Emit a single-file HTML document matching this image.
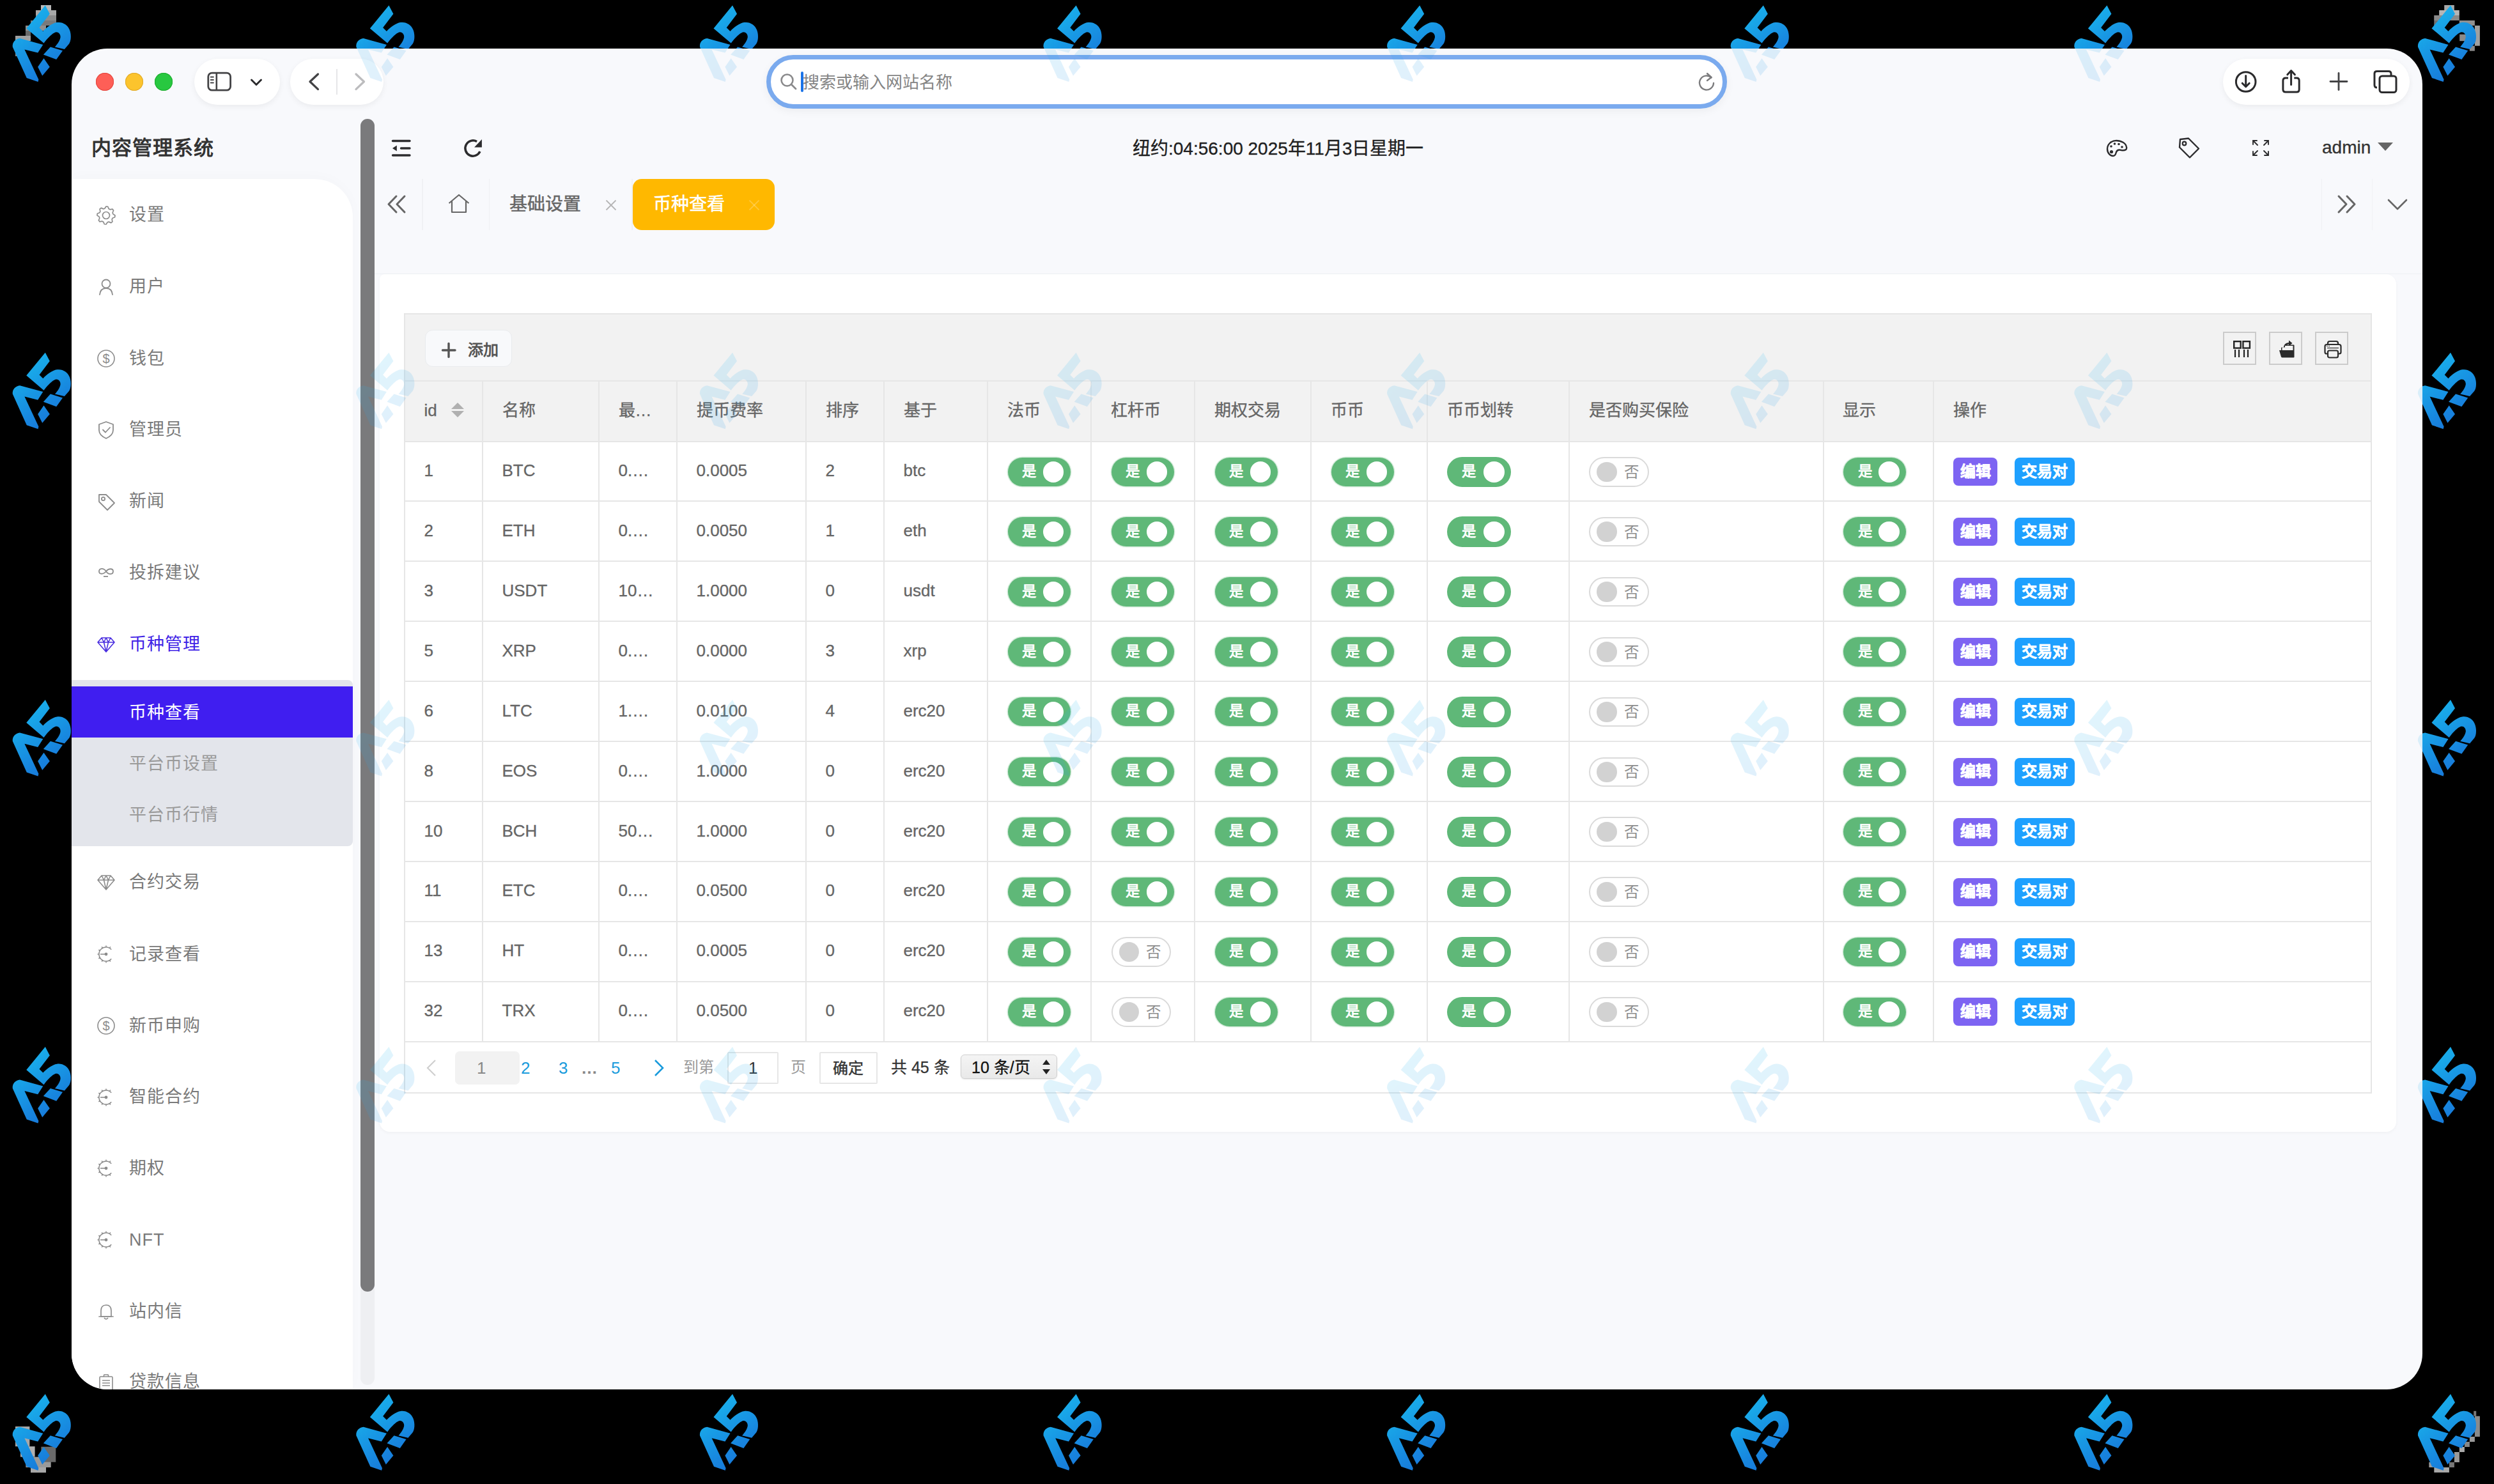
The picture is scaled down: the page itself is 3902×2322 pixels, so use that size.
<!DOCTYPE html><html lang="zh-CN"><head><meta charset="utf-8"><title>币种查看</title><style>
*{box-sizing:border-box;margin:0;padding:0}
html,body{width:3902px;height:2322px;overflow:hidden;background:#000;font-family:"Liberation Sans", sans-serif}
.a{position:absolute}
.t{position:absolute;white-space:nowrap;line-height:1}
svg{position:absolute;overflow:visible}
</style></head><body>
<svg width="0" height="0" style="position:absolute"><defs>
<linearGradient id="wg" gradientUnits="userSpaceOnUse" x1="-45" y1="-50" x2="35" y2="55"><stop offset="0" stop-color="#16b8ee"/><stop offset="1" stop-color="#1468d4"/></linearGradient>
<linearGradient id="wg2" gradientUnits="userSpaceOnUse" x1="-45" y1="-50" x2="35" y2="55"><stop offset="0" stop-color="#2cc6f6"/><stop offset="1" stop-color="#2a92e8"/></linearGradient>
<g id="wm">
<path d="M2.8,-58.5 L9.8,-45.2 L-6.5,-23.8 L-0.7,-18 C5,-24 14,-31 21.4,-31.9 C30,-33 38,-28 41,-20 C44,-12 43,-2 39.9,1.7 L32.9,9.9 L17.9,6.4 C22,2 26,-4 26.6,-8.7 C27,-13 24,-17 20.2,-16.8 C16,-16.5 10,-11 4,-4 L0.5,0.6 L-26.7,-22.6 Z"/>
<path d="M-48.2,6.4 C-49,-1 -44,-6 -37,-7 L-0.7,2.9 L-8.8,15.6 L-29.6,10.4 L-7.6,57.4 L-8.5,61 L-26.2,55 Z"/>
<path d="M10.9,6.4 L30,12.2 L20.2,26.1 L-0.1,18.5 Z"/>
<path d="M0.5,24.3 L9.8,37.7 L-1.8,51.6 L-8.8,37.7 Z"/>
</g></defs></svg>
<svg class="a" style="left:0;top:0" width="3902" height="2322"><rect x="64.0" y="8.0" width="16.0" height="8.0" fill="#b8b8b8"/><rect x="56.0" y="16.0" width="32.0" height="8.0" fill="#a8a8a8"/><rect x="56.0" y="24.0" width="32.0" height="8.0" fill="#8c8c8c"/><rect x="48.0" y="32.0" width="40.0" height="8.0" fill="#7a7a7a"/><rect x="40.0" y="40.0" width="32.0" height="8.0" fill="#909090"/><rect x="40.0" y="48.0" width="8.0" height="8.0" fill="#6a6a6a"/><rect x="24.0" y="56.0" width="24.0" height="8.0" fill="#a0a0a0"/><rect x="24.0" y="64.0" width="8.0" height="24.0" fill="#888888"/><rect x="3824.2" y="8.0" width="15.6" height="8.0" fill="#a8a8a8"/><rect x="3816.2" y="16.0" width="31.6" height="8.0" fill="#b5b5b5"/><rect x="3808.2" y="24.0" width="39.6" height="8.0" fill="#8a8a8a"/><rect x="3808.2" y="32.0" width="15.6" height="8.0" fill="#707070"/><rect x="3847.8" y="32.0" width="24.1" height="8.0" fill="#909090"/><rect x="3871.9" y="40.0" width="8.0" height="31.7" fill="#a0a0a0"/><rect x="3863.9" y="71.7" width="8.0" height="8.0" fill="#8a8a8a"/><rect x="3848.2" y="53.8" width="11.4" height="10.4" fill="#8a8a8a"/><rect x="24.0" y="2232.0" width="22.4" height="31.2" fill="#a8a8a8"/><rect x="32.0" y="2263.2" width="22.6" height="16.4" fill="#b0b0b0"/><rect x="40.4" y="2279.6" width="39.3" height="16.4" fill="#9a9a9a"/><rect x="48.0" y="2296.0" width="24.0" height="8.2" fill="#a8a8a8"/><rect x="64.4" y="2263.7" width="22.9" height="24.0" fill="#6a6a6a"/><rect x="3870.2" y="2207.8" width="4.0" height="8.0" fill="#777777"/><rect x="3871.9" y="2215.8" width="8.0" height="32.2" fill="#8a8a8a"/><rect x="3863.9" y="2248.0" width="8.0" height="8.0" fill="#999999"/><rect x="3855.9" y="2256.0" width="8.0" height="8.0" fill="#888888"/><rect x="3847.9" y="2264.0" width="8.0" height="8.0" fill="#aaaaaa"/><rect x="3839.9" y="2272.0" width="8.0" height="16.0" fill="#9a9a9a"/><rect x="3831.9" y="2288.0" width="8.0" height="8.0" fill="#777777"/><rect x="3808.3" y="2296.0" width="23.6" height="8.0" fill="#a8a8a8"/><rect x="3800.3" y="2288.0" width="8.0" height="8.0" fill="#999999"/></svg>
<svg class="a" style="left:0;top:0;opacity:1" width="3902" height="2322" viewBox="0 0 3902 2322"><use href="#wm" fill="url(#wg)" transform="translate(68.0,67.0)"/><use href="#wm" fill="url(#wg)" transform="translate(605.6,67.0)"/><use href="#wm" fill="url(#wg)" transform="translate(1143.2,67.0)"/><use href="#wm" fill="url(#wg)" transform="translate(1680.8,67.0)"/><use href="#wm" fill="url(#wg)" transform="translate(2218.4,67.0)"/><use href="#wm" fill="url(#wg)" transform="translate(2756.0,67.0)"/><use href="#wm" fill="url(#wg)" transform="translate(3293.6,67.0)"/><use href="#wm" fill="url(#wg)" transform="translate(3831.2,67.0)"/><use href="#wm" fill="url(#wg)" transform="translate(68.0,610.2)"/><use href="#wm" fill="url(#wg)" transform="translate(605.6,610.2)"/><use href="#wm" fill="url(#wg)" transform="translate(1143.2,610.2)"/><use href="#wm" fill="url(#wg)" transform="translate(1680.8,610.2)"/><use href="#wm" fill="url(#wg)" transform="translate(2218.4,610.2)"/><use href="#wm" fill="url(#wg)" transform="translate(2756.0,610.2)"/><use href="#wm" fill="url(#wg)" transform="translate(3293.6,610.2)"/><use href="#wm" fill="url(#wg)" transform="translate(3831.2,610.2)"/><use href="#wm" fill="url(#wg)" transform="translate(68.0,1153.4)"/><use href="#wm" fill="url(#wg)" transform="translate(605.6,1153.4)"/><use href="#wm" fill="url(#wg)" transform="translate(1143.2,1153.4)"/><use href="#wm" fill="url(#wg)" transform="translate(1680.8,1153.4)"/><use href="#wm" fill="url(#wg)" transform="translate(2218.4,1153.4)"/><use href="#wm" fill="url(#wg)" transform="translate(2756.0,1153.4)"/><use href="#wm" fill="url(#wg)" transform="translate(3293.6,1153.4)"/><use href="#wm" fill="url(#wg)" transform="translate(3831.2,1153.4)"/><use href="#wm" fill="url(#wg)" transform="translate(68.0,1696.6)"/><use href="#wm" fill="url(#wg)" transform="translate(605.6,1696.6)"/><use href="#wm" fill="url(#wg)" transform="translate(1143.2,1696.6)"/><use href="#wm" fill="url(#wg)" transform="translate(1680.8,1696.6)"/><use href="#wm" fill="url(#wg)" transform="translate(2218.4,1696.6)"/><use href="#wm" fill="url(#wg)" transform="translate(2756.0,1696.6)"/><use href="#wm" fill="url(#wg)" transform="translate(3293.6,1696.6)"/><use href="#wm" fill="url(#wg)" transform="translate(3831.2,1696.6)"/><use href="#wm" fill="url(#wg)" transform="translate(68.0,2239.8)"/><use href="#wm" fill="url(#wg)" transform="translate(605.6,2239.8)"/><use href="#wm" fill="url(#wg)" transform="translate(1143.2,2239.8)"/><use href="#wm" fill="url(#wg)" transform="translate(1680.8,2239.8)"/><use href="#wm" fill="url(#wg)" transform="translate(2218.4,2239.8)"/><use href="#wm" fill="url(#wg)" transform="translate(2756.0,2239.8)"/><use href="#wm" fill="url(#wg)" transform="translate(3293.6,2239.8)"/><use href="#wm" fill="url(#wg)" transform="translate(3831.2,2239.8)"/></svg>
<div class="a" style="left:112px;top:76px;width:3678px;height:2098px;background:#f8f9fc;border-radius:56px;overflow:hidden">
<div class="a" style="left:38px;top:38px;width:28px;height:28px;border-radius:50%;background:#fe5f57;box-shadow:inset 0 0 0 1px #e2463f"></div>
<div class="a" style="left:84px;top:38px;width:28px;height:28px;border-radius:50%;background:#fcc42d;box-shadow:inset 0 0 0 1px #dfa92a"></div>
<div class="a" style="left:130px;top:38px;width:28px;height:28px;border-radius:50%;background:#28c840;box-shadow:inset 0 0 0 1px #1eab2f"></div>
<div class="a" style="left:192.0px;top:16.0px;width:134.0px;height:72.0px;background:#fff;border-radius:36px;box-shadow:0 3px 10px rgba(0,0,0,0.06)"></div>
<svg style="left:210.0px;top:34.0px" width="44" height="36" viewBox="0 0 44 36"><rect x="3.8" y="4.1" width="34.8" height="27.1" rx="6" fill="none" stroke="#434345" stroke-width="2.8"/><line x1="16.8" y1="4.1" x2="16.8" y2="31.2" stroke="#434345" stroke-width="2.6"/><g stroke="#434345" stroke-width="2.2" stroke-linecap="round"><line x1="7.8" y1="10.5" x2="11.8" y2="10.5"/><line x1="7.8" y1="15" x2="11.8" y2="15"/><line x1="7.8" y1="19.5" x2="11.8" y2="19.5"/></g></svg>
<svg style="left:276.0px;top:44.0px" width="26" height="18" viewBox="0 0 26 18"><polyline points="5.5,5 13,12.5 20.5,5" fill="none" stroke="#2a2a2c" stroke-width="2.9" stroke-linecap="round" stroke-linejoin="round"/></svg>
<div class="a" style="left:342.0px;top:16.0px;width:146.0px;height:72.0px;background:#fff;border-radius:36px;box-shadow:0 3px 10px rgba(0,0,0,0.06)"></div>
<svg style="left:366.0px;top:34.0px" width="26" height="36" viewBox="0 0 26 36"><polyline points="19.5,6 7,17.8 19.5,29.6" fill="none" stroke="#434345" stroke-width="3.3" stroke-linecap="round" stroke-linejoin="round"/></svg>
<div class="a" style="left:414.0px;top:32.0px;width:2.0px;height:40.0px;background:#e6e6e8"></div>
<svg style="left:438.0px;top:34.0px" width="26" height="36" viewBox="0 0 26 36"><polyline points="7,6 19.5,17.8 7,29.6" fill="none" stroke="#bcbcbe" stroke-width="3.3" stroke-linecap="round" stroke-linejoin="round"/></svg>
<div class="a" style="left:1087.0px;top:10.0px;width:1503.0px;height:84.0px;background:#fff;border:7px solid #7aaaee;border-radius:42px;box-shadow:0 4px 14px rgba(0,0,0,0.05)"></div>
<svg style="left:1108.0px;top:38.0px" width="30" height="30" viewBox="0 0 30 30"><circle cx="11.5" cy="11.5" r="9" fill="none" stroke="#8a8a8c" stroke-width="2.6"/><line x1="18" y1="18" x2="25" y2="25" stroke="#8a8a8c" stroke-width="2.8" stroke-linecap="round"/></svg>
<div class="a" style="left:1141.0px;top:36.0px;width:4.0px;height:32.0px;background:#1a73e8;border-radius:2px"></div>
<div class="t" style="left:1144.0px;top:40.0px;font-size:26px;color:#858585;font-weight:500;">搜索或输入网站名称</div>
<svg style="left:2542.0px;top:36.0px" width="32" height="32" viewBox="0 0 32 32"><path d="M23.5,9.5 A11,11 0 1 0 27,18" fill="none" stroke="#7c7c7e" stroke-width="2.4" stroke-linecap="round"/><polyline points="17,3 23.5,9 17,14" fill="none" stroke="#7c7c7e" stroke-width="2.4" stroke-linecap="round" stroke-linejoin="round"/></svg>
<div class="a" style="left:3366.0px;top:16.0px;width:292.0px;height:72.0px;background:#fff;border-radius:36px;box-shadow:0 3px 10px rgba(0,0,0,0.06)"></div>
<svg style="left:3382.0px;top:33.0px" width="40" height="40" viewBox="0 0 40 40"><circle cx="19.7" cy="19" r="15.3" fill="none" stroke="#2a2a2c" stroke-width="3"/><line x1="19.7" y1="9.5" x2="19.7" y2="26" stroke="#2a2a2c" stroke-width="3" stroke-linecap="round"/><polyline points="14.2,21.2 19.7,26.7 25.2,21.2" fill="none" stroke="#2a2a2c" stroke-width="3" stroke-linecap="round" stroke-linejoin="round"/></svg>
<svg style="left:3454.0px;top:29.0px" width="40" height="44" viewBox="0 0 40 44"><path d="M14,16.9 L10,16.9 Q5.9,16.9 5.9,21 L5.9,35 Q5.9,39 10,39 L27.2,39 Q31.2,39 31.2,35 L31.2,21 Q31.2,16.9 27.2,16.9 L23.3,16.9" fill="none" stroke="#2a2a2c" stroke-width="3" stroke-linejoin="round"/><line x1="18.6" y1="6" x2="18.6" y2="27.5" stroke="#2a2a2c" stroke-width="3" stroke-linecap="round"/><polyline points="12.8,11.8 18.6,5.6 24.4,11.8" fill="none" stroke="#2a2a2c" stroke-width="3" stroke-linecap="round" stroke-linejoin="round"/></svg>
<svg style="left:3530.0px;top:35.0px" width="34" height="34" viewBox="0 0 34 34"><line x1="17" y1="3.5" x2="17" y2="29.5" stroke="#434345" stroke-width="2.8" stroke-linecap="round"/><line x1="4" y1="16.5" x2="30" y2="16.5" stroke="#434345" stroke-width="2.8" stroke-linecap="round"/></svg>
<svg style="left:3598.0px;top:30.0px" width="44" height="44" viewBox="0 0 44 44"><path d="M9,31 Q5,31 5,27 L5,9 Q5,5.5 9,5.5 L27,5.5 Q31,5.5 31,9.5 L31,12" fill="none" stroke="#2a2a2c" stroke-width="3"/><rect x="13" y="13" width="26" height="25.5" rx="4" fill="none" stroke="#2a2a2c" stroke-width="3"/></svg>
<div class="t" style="left:31.0px;top:140.0px;font-size:31px;color:#333;font-weight:bold;letter-spacing:1px">内容管理系统</div>
<div class="a" style="left:0;top:204px;width:440px;height:1894px;background:#fff;border-top-right-radius:60px;box-shadow:0 -4px 20px rgba(0,0,0,0.02)"></div>
<svg style="left:40.0px;top:246.5px" width="28" height="28" viewBox="0 0 28 28"><path d="M14.00,0.00 L16.73,0.27 L18.21,3.84 L20.11,4.85 L23.90,4.10 L25.64,6.22 L24.16,9.79 L24.79,11.85 L28.00,14.00 L27.73,16.73 L24.16,18.21 L23.15,20.11 L23.90,23.90 L21.78,25.64 L18.21,24.16 L16.15,24.79 L14.00,28.00 L11.27,27.73 L9.79,24.16 L7.89,23.15 L4.10,23.90 L2.36,21.78 L3.84,18.21 L3.21,16.15 L0.00,14.00 L0.27,11.27 L3.84,9.79 L4.85,7.89 L4.10,4.10 L6.22,2.36 L9.79,3.84 L11.85,3.21Z" fill="none" stroke="#8c8c8c" stroke-width="1.7" stroke-linejoin="round"/><circle cx="14" cy="14" r="5.5" fill="none" stroke="#8c8c8c" stroke-width="1.7"/></svg>
<div class="t" style="left:90.0px;top:247.2px;font-size:27px;color:#7a7a7a;font-weight:normal;letter-spacing:1px">设置</div>
<svg style="left:40.0px;top:358.5px" width="28" height="28" viewBox="0 0 28 28"><circle cx="14" cy="9" r="6.5" fill="none" stroke="#8c8c8c" stroke-width="1.8"/><path d="M4,26 Q5,16 14,16 Q23,16 24,26" fill="none" stroke="#8c8c8c" stroke-width="1.8" stroke-linecap="round"/></svg>
<div class="t" style="left:90.0px;top:359.2px;font-size:27px;color:#7a7a7a;font-weight:normal;letter-spacing:1px">用户</div>
<svg style="left:40.0px;top:471.0px" width="28" height="28" viewBox="0 0 28 28"><circle cx="14" cy="14" r="13" fill="none" stroke="#8c8c8c" stroke-width="1.6"/><text x="14" y="21" text-anchor="middle" font-size="20" fill="#8c8c8c" font-family="Liberation Sans">$</text></svg>
<div class="t" style="left:90.0px;top:471.7px;font-size:27px;color:#7a7a7a;font-weight:normal;letter-spacing:1px">钱包</div>
<svg style="left:40.0px;top:582.0px" width="28" height="28" viewBox="0 0 28 28"><path d="M14,2 L25,6 L25,15 Q25,23 14,28 Q3,23 3,15 L3,6 Z" fill="none" stroke="#8c8c8c" stroke-width="1.8" stroke-linejoin="round"/><polyline points="9,14.5 13,18.5 20,11" fill="none" stroke="#8c8c8c" stroke-width="1.8" stroke-linecap="round" stroke-linejoin="round"/></svg>
<div class="t" style="left:90.0px;top:582.7px;font-size:27px;color:#7a7a7a;font-weight:normal;letter-spacing:1px">管理员</div>
<svg style="left:40.0px;top:694.5px" width="28" height="28" viewBox="0 0 28 28"><path d="M3,3 L14,3 L27,16 L16,27 L3,14 Z" fill="none" stroke="#8c8c8c" stroke-width="1.8" stroke-linejoin="round"/><circle cx="9.5" cy="9.5" r="2.6" fill="none" stroke="#8c8c8c" stroke-width="1.8"/></svg>
<div class="t" style="left:90.0px;top:695.2px;font-size:27px;color:#7a7a7a;font-weight:normal;letter-spacing:1px">新闻</div>
<svg style="left:40.0px;top:806.0px" width="28" height="28" viewBox="0 0 28 28"><path d="M14,12 C10,6 3,7 3,12 C3,17 10,17 14,12 C18,7 25,7 25,12 C25,17 18,18 14,12" fill="none" stroke="#8c8c8c" stroke-width="1.8"/><line x1="10" y1="20" x2="17" y2="20" stroke="#8c8c8c" stroke-width="1.8"/></svg>
<div class="t" style="left:90.0px;top:806.7px;font-size:27px;color:#7a7a7a;font-weight:normal;letter-spacing:1px">投拆建议</div>
<svg style="left:40.0px;top:917.5px" width="28" height="28" viewBox="0 0 28 28"><path d="M7,4 L21,4 L27,11 L14,26 L1,11 Z M1,11 L27,11 M7,4 L10.5,11 L14,26 L17.5,11 L21,4 M10.5,11 L14,4 L17.5,11" fill="none" stroke="#4a2ee0" stroke-width="1.6" stroke-linejoin="round"/></svg>
<div class="t" style="left:90.0px;top:919.2px;font-size:27px;color:#3f22e6;font-weight:normal;letter-spacing:1px">币种管理</div>
<div class="a" style="left:0;top:988px;width:440px;height:259.5px;background:#e3e5eb;border-bottom-right-radius:8px;border-top-right-radius:8px"></div>
<div class="a" style="left:0.0px;top:998.0px;width:440.0px;height:79.5px;background:#401ef0"></div>
<div class="t" style="left:90.0px;top:1025.7px;font-size:27px;color:#fff;font-weight:normal;letter-spacing:1px">币种查看</div>
<div class="t" style="left:90.0px;top:1105.7px;font-size:27px;color:#9a9a9a;font-weight:normal;letter-spacing:1px">平台币设置</div>
<div class="t" style="left:90.0px;top:1186.2px;font-size:27px;color:#9a9a9a;font-weight:normal;letter-spacing:1px">平台币行情</div>
<svg style="left:40.0px;top:1290.0px" width="28" height="28" viewBox="0 0 28 28"><path d="M7,4 L21,4 L27,11 L14,26 L1,11 Z M1,11 L27,11 M7,4 L10.5,11 L14,26 L17.5,11 L21,4 M10.5,11 L14,4 L17.5,11" fill="none" stroke="#8c8c8c" stroke-width="1.6" stroke-linejoin="round"/></svg>
<div class="t" style="left:90.0px;top:1290.7px;font-size:27px;color:#7a7a7a;font-weight:normal;letter-spacing:1px">合约交易</div>
<svg style="left:40.0px;top:1403.0px" width="28" height="28" viewBox="0 0 28 28"><path d="M22.2,6.8 A11,11 0 1 0 22.2,21.2" fill="none" stroke="#8c8c8c" stroke-width="1.6"/><line x1="14.00" y1="3.00" x2="14.00" y2="0.50" stroke="#8c8c8c" stroke-width="1.5"/><line x1="19.50" y1="4.47" x2="20.75" y2="2.31" stroke="#8c8c8c" stroke-width="1.5"/><line x1="8.50" y1="4.47" x2="7.25" y2="2.31" stroke="#8c8c8c" stroke-width="1.5"/><line x1="4.47" y1="8.50" x2="2.31" y2="7.25" stroke="#8c8c8c" stroke-width="1.5"/><line x1="3.00" y1="14.00" x2="0.50" y2="14.00" stroke="#8c8c8c" stroke-width="1.5"/><line x1="4.47" y1="19.50" x2="2.31" y2="20.75" stroke="#8c8c8c" stroke-width="1.5"/><line x1="8.50" y1="23.53" x2="7.25" y2="25.69" stroke="#8c8c8c" stroke-width="1.5"/><line x1="14.00" y1="25.00" x2="14.00" y2="27.50" stroke="#8c8c8c" stroke-width="1.5"/><line x1="19.50" y1="23.53" x2="20.75" y2="25.69" stroke="#8c8c8c" stroke-width="1.5"/><line x1="5" y1="14" x2="13" y2="14" stroke="#8c8c8c" stroke-width="1.6"/><circle cx="14" cy="14" r="2.4" fill="#8c8c8c"/></svg>
<div class="t" style="left:90.0px;top:1403.7px;font-size:27px;color:#7a7a7a;font-weight:normal;letter-spacing:1px">记录查看</div>
<svg style="left:40.0px;top:1515.0px" width="28" height="28" viewBox="0 0 28 28"><circle cx="14" cy="14" r="13" fill="none" stroke="#8c8c8c" stroke-width="1.6"/><text x="14" y="21" text-anchor="middle" font-size="20" fill="#8c8c8c" font-family="Liberation Sans">$</text></svg>
<div class="t" style="left:90.0px;top:1515.7px;font-size:27px;color:#7a7a7a;font-weight:normal;letter-spacing:1px">新币申购</div>
<svg style="left:40.0px;top:1626.5px" width="28" height="28" viewBox="0 0 28 28"><path d="M22.2,6.8 A11,11 0 1 0 22.2,21.2" fill="none" stroke="#8c8c8c" stroke-width="1.6"/><line x1="14.00" y1="3.00" x2="14.00" y2="0.50" stroke="#8c8c8c" stroke-width="1.5"/><line x1="19.50" y1="4.47" x2="20.75" y2="2.31" stroke="#8c8c8c" stroke-width="1.5"/><line x1="8.50" y1="4.47" x2="7.25" y2="2.31" stroke="#8c8c8c" stroke-width="1.5"/><line x1="4.47" y1="8.50" x2="2.31" y2="7.25" stroke="#8c8c8c" stroke-width="1.5"/><line x1="3.00" y1="14.00" x2="0.50" y2="14.00" stroke="#8c8c8c" stroke-width="1.5"/><line x1="4.47" y1="19.50" x2="2.31" y2="20.75" stroke="#8c8c8c" stroke-width="1.5"/><line x1="8.50" y1="23.53" x2="7.25" y2="25.69" stroke="#8c8c8c" stroke-width="1.5"/><line x1="14.00" y1="25.00" x2="14.00" y2="27.50" stroke="#8c8c8c" stroke-width="1.5"/><line x1="19.50" y1="23.53" x2="20.75" y2="25.69" stroke="#8c8c8c" stroke-width="1.5"/><line x1="5" y1="14" x2="13" y2="14" stroke="#8c8c8c" stroke-width="1.6"/><circle cx="14" cy="14" r="2.4" fill="#8c8c8c"/></svg>
<div class="t" style="left:90.0px;top:1627.2px;font-size:27px;color:#7a7a7a;font-weight:normal;letter-spacing:1px">智能合约</div>
<svg style="left:40.0px;top:1738.0px" width="28" height="28" viewBox="0 0 28 28"><path d="M22.2,6.8 A11,11 0 1 0 22.2,21.2" fill="none" stroke="#8c8c8c" stroke-width="1.6"/><line x1="14.00" y1="3.00" x2="14.00" y2="0.50" stroke="#8c8c8c" stroke-width="1.5"/><line x1="19.50" y1="4.47" x2="20.75" y2="2.31" stroke="#8c8c8c" stroke-width="1.5"/><line x1="8.50" y1="4.47" x2="7.25" y2="2.31" stroke="#8c8c8c" stroke-width="1.5"/><line x1="4.47" y1="8.50" x2="2.31" y2="7.25" stroke="#8c8c8c" stroke-width="1.5"/><line x1="3.00" y1="14.00" x2="0.50" y2="14.00" stroke="#8c8c8c" stroke-width="1.5"/><line x1="4.47" y1="19.50" x2="2.31" y2="20.75" stroke="#8c8c8c" stroke-width="1.5"/><line x1="8.50" y1="23.53" x2="7.25" y2="25.69" stroke="#8c8c8c" stroke-width="1.5"/><line x1="14.00" y1="25.00" x2="14.00" y2="27.50" stroke="#8c8c8c" stroke-width="1.5"/><line x1="19.50" y1="23.53" x2="20.75" y2="25.69" stroke="#8c8c8c" stroke-width="1.5"/><line x1="5" y1="14" x2="13" y2="14" stroke="#8c8c8c" stroke-width="1.6"/><circle cx="14" cy="14" r="2.4" fill="#8c8c8c"/></svg>
<div class="t" style="left:90.0px;top:1738.7px;font-size:27px;color:#7a7a7a;font-weight:normal;letter-spacing:1px">期权</div>
<svg style="left:40.0px;top:1850.0px" width="28" height="28" viewBox="0 0 28 28"><path d="M22.2,6.8 A11,11 0 1 0 22.2,21.2" fill="none" stroke="#8c8c8c" stroke-width="1.6"/><line x1="14.00" y1="3.00" x2="14.00" y2="0.50" stroke="#8c8c8c" stroke-width="1.5"/><line x1="19.50" y1="4.47" x2="20.75" y2="2.31" stroke="#8c8c8c" stroke-width="1.5"/><line x1="8.50" y1="4.47" x2="7.25" y2="2.31" stroke="#8c8c8c" stroke-width="1.5"/><line x1="4.47" y1="8.50" x2="2.31" y2="7.25" stroke="#8c8c8c" stroke-width="1.5"/><line x1="3.00" y1="14.00" x2="0.50" y2="14.00" stroke="#8c8c8c" stroke-width="1.5"/><line x1="4.47" y1="19.50" x2="2.31" y2="20.75" stroke="#8c8c8c" stroke-width="1.5"/><line x1="8.50" y1="23.53" x2="7.25" y2="25.69" stroke="#8c8c8c" stroke-width="1.5"/><line x1="14.00" y1="25.00" x2="14.00" y2="27.50" stroke="#8c8c8c" stroke-width="1.5"/><line x1="19.50" y1="23.53" x2="20.75" y2="25.69" stroke="#8c8c8c" stroke-width="1.5"/><line x1="5" y1="14" x2="13" y2="14" stroke="#8c8c8c" stroke-width="1.6"/><circle cx="14" cy="14" r="2.4" fill="#8c8c8c"/></svg>
<div class="t" style="left:90.0px;top:1850.7px;font-size:27px;color:#7a7a7a;font-weight:normal;letter-spacing:1px">NFT</div>
<svg style="left:40.0px;top:1962.0px" width="28" height="28" viewBox="0 0 28 28"><path d="M6,22 L6,13 Q6,4 14,4 Q22,4 22,13 L22,22 Z" fill="none" stroke="#8c8c8c" stroke-width="1.7" stroke-linejoin="round"/><line x1="3" y1="22" x2="25" y2="22" stroke="#8c8c8c" stroke-width="1.7" stroke-linecap="round"/><path d="M11,24 Q14,28 17,24" fill="none" stroke="#8c8c8c" stroke-width="1.7"/></svg>
<div class="t" style="left:90.0px;top:1962.7px;font-size:27px;color:#7a7a7a;font-weight:normal;letter-spacing:1px">站内信</div>
<svg style="left:40.0px;top:2072.0px" width="28" height="28" viewBox="0 0 28 28"><rect x="4" y="6" width="20" height="22" rx="1.5" fill="none" stroke="#8c8c8c" stroke-width="1.6"/><path d="M10,6 L11,3 L17,3 L18,6" fill="none" stroke="#8c8c8c" stroke-width="1.6"/><g stroke="#8c8c8c" stroke-width="1.4"><line x1="8" y1="12" x2="20" y2="12"/><line x1="8" y1="16" x2="20" y2="16"/><line x1="8" y1="20" x2="20" y2="20"/></g></svg>
<div class="t" style="left:90.0px;top:2072.7px;font-size:27px;color:#7a7a7a;font-weight:normal;letter-spacing:1px">贷款信息</div>
<div class="a" style="left:452.0px;top:110.0px;width:22.0px;height:1981.0px;background:#eeeff2;border-radius:11px"></div>
<div class="a" style="left:452.0px;top:110.0px;width:22.0px;height:1835.0px;background:#7a7a7c;border-radius:11px"></div>
<svg style="left:498.0px;top:140.0px" width="36" height="32" viewBox="0 0 36 32"><g stroke="#2c2c2e" stroke-width="3.4" stroke-linecap="round"><line x1="4.5" y1="4.5" x2="31" y2="4.5"/><line x1="17.5" y1="16" x2="31" y2="16"/><line x1="4.5" y1="27" x2="31" y2="27"/></g><polygon points="4,16 10.8,11.5 10.8,20.5" fill="#2c2c2e"/></svg>
<svg style="left:612.0px;top:138.0px" width="34" height="34" viewBox="0 0 34 34"><path d="M22.05,7.52 A12.1,12.1 0 1 0 26.97,23.1" fill="none" stroke="#2c2c2e" stroke-width="3.5"/><polygon points="18.1,16.6 29.9,16.6 29.9,4" fill="#2c2c2e"/></svg>
<div class="t" style="left:1660.0px;top:142.5px;font-size:28px;color:#1f1f1f;font-weight:normal;-webkit-text-stroke:0.35px #1f1f1f">纽约:04:56:00 2025年11月3日星期一</div>
<svg style="left:3182.0px;top:140.0px" width="38" height="32" viewBox="0 0 38 32"><path d="M17,4 C8,4 3,11 3,17 C3,24 8,28 12,28 C16,28 16,25 17,22 C18,19 21,18 25,19 C31,20 34,18 33,14 C32,8 25,4 17,4 Z" fill="none" stroke="#2c2c2e" stroke-width="2.4"/><circle cx="9.5" cy="21.5" r="2.6" fill="#2c2c2e"/><circle cx="9" cy="13" r="1.8" fill="#2c2c2e"/><circle cx="14.5" cy="9" r="1.8" fill="#2c2c2e"/><circle cx="21" cy="9.5" r="1.8" fill="#2c2c2e"/><circle cx="26" cy="14" r="1.8" fill="#2c2c2e"/></svg>
<svg style="left:3295.0px;top:138.0px" width="36" height="36" viewBox="0 0 36 36"><path d="M4,4 L17,2.5 L33,18.5 L19,32.5 L3,16.5 Z" fill="none" stroke="#2c2c2e" stroke-width="2.4" stroke-linejoin="round"/><circle cx="10.5" cy="10.5" r="2.8" fill="none" stroke="#2c2c2e" stroke-width="2.2"/></svg>
<svg style="left:3410.0px;top:141.0px" width="30" height="30" viewBox="0 0 30 30"><g fill="none" stroke="#2c2c2e" stroke-width="1.9" stroke-linecap="round" stroke-linejoin="round"><polyline points="3,9 3,3 9,3"/><line x1="3" y1="3" x2="10" y2="10"/><polyline points="21,3 27,3 27,9"/><line x1="27" y1="3" x2="20" y2="10"/><polyline points="3,20 3,26 9,26"/><line x1="3" y1="26" x2="10" y2="19"/><polyline points="27,20 27,26 21,26"/><line x1="27" y1="26" x2="20" y2="19"/></g></svg>
<div class="t" style="left:3521.0px;top:140.5px;font-size:28px;color:#333;font-weight:normal;-webkit-text-stroke:0.35px #333">admin</div>
<svg style="left:3608.0px;top:147.0px" width="25" height="14" viewBox="0 0 25 14"><polygon points="0,0 24,0 12,13" fill="#666"/></svg>
<svg style="left:492.0px;top:228.0px" width="34" height="32" viewBox="0 0 34 32"><g fill="none" stroke="#666" stroke-width="3" stroke-linecap="round" stroke-linejoin="round"><polyline points="16,3 4,15.5 16,28"/><polyline points="29,3 17,15.5 29,28"/></g></svg>
<div class="a" style="left:548.0px;top:204.0px;width:1.5px;height:80.0px;background:#f0f1f4"></div>
<svg style="left:588.0px;top:226.0px" width="36" height="34" viewBox="0 0 36 34"><path d="M2.5,16 L18,3 L33.5,16 M7,13 L7,30 L29,30 L29,13" fill="none" stroke="#666" stroke-width="2.2" stroke-linejoin="round"/></svg>
<div class="a" style="left:652.5px;top:204.0px;width:1.5px;height:80.0px;background:#f0f1f4"></div>
<div class="t" style="left:685.0px;top:230.0px;font-size:28px;color:#666;font-weight:normal;-webkit-text-stroke:0.5px #666">基础设置</div>
<svg style="left:834.0px;top:235.0px" width="20" height="20" viewBox="0 0 20 20"><g stroke="#b5b5b5" stroke-width="1.8"><line x1="2.5" y1="2.5" x2="17.5" y2="17.5"/><line x1="17.5" y1="2.5" x2="2.5" y2="17.5"/></g></svg>
<div class="a" style="left:876.0px;top:204.0px;width:1.5px;height:80.0px;background:#f0f1f4"></div>
<div class="a" style="left:878.0px;top:204.0px;width:222.0px;height:80.0px;background:#ffb800;border-radius:14px"></div>
<div class="t" style="left:910.0px;top:230.0px;font-size:28px;color:#fff;font-weight:normal;-webkit-text-stroke:0.5px #fff">币种查看</div>
<svg style="left:1058.0px;top:235.0px" width="20" height="20" viewBox="0 0 20 20"><g stroke="rgba(255,255,255,0.22)" stroke-width="1.8"><line x1="2.5" y1="2.5" x2="17.5" y2="17.5"/><line x1="17.5" y1="2.5" x2="2.5" y2="17.5"/></g></svg>
<div class="a" style="left:3519.5px;top:204.0px;width:1.5px;height:80.0px;background:#f0f1f4"></div>
<svg style="left:3542.0px;top:228.0px" width="34" height="32" viewBox="0 0 34 32"><g fill="none" stroke="#666" stroke-width="3" stroke-linecap="round" stroke-linejoin="round"><polyline points="5,3 17,15.5 5,28"/><polyline points="18,3 30,15.5 18,28"/></g></svg>
<div class="a" style="left:3598.5px;top:204.0px;width:1.5px;height:80.0px;background:#f0f1f4"></div>
<svg style="left:3622.0px;top:234.0px" width="34" height="24" viewBox="0 0 34 24"><polyline points="3,3 17,17 31,3" fill="none" stroke="#666" stroke-width="2.6" stroke-linecap="round" stroke-linejoin="round"/></svg>
<div class="a" style="left:474.0px;top:352.0px;width:3204.0px;height:1.0px;background:#eef0f3"></div>
<div class="a" style="left:482.0px;top:353.0px;width:3155.0px;height:1342.0px;background:#fff;border-radius:8px 16px 16px 16px;box-shadow:0 2px 5px rgba(0,0,0,0.035)"></div>
<div class="a" style="left:521.0px;top:414.5px;width:3077.0px;height:200.0px;background:#f2f2f2"></div>
<div class="a" style="left:520.0px;top:413.5px;width:3079.0px;height:1221.5px;border:2px solid #e6e6e6"></div>
<div class="a" style="left:521.0px;top:519.0px;width:3077.0px;height:2.0px;background:#e6e6e6"></div>
<div class="a" style="left:521.0px;top:613.5px;width:3077.0px;height:2.0px;background:#e6e6e6"></div>
<div class="a" style="left:521.0px;top:707.4px;width:3077.0px;height:2.0px;background:#e6e6e6"></div>
<div class="a" style="left:521.0px;top:801.3px;width:3077.0px;height:2.0px;background:#e6e6e6"></div>
<div class="a" style="left:521.0px;top:895.2px;width:3077.0px;height:2.0px;background:#e6e6e6"></div>
<div class="a" style="left:521.0px;top:989.1px;width:3077.0px;height:2.0px;background:#e6e6e6"></div>
<div class="a" style="left:521.0px;top:1083.0px;width:3077.0px;height:2.0px;background:#e6e6e6"></div>
<div class="a" style="left:521.0px;top:1176.9px;width:3077.0px;height:2.0px;background:#e6e6e6"></div>
<div class="a" style="left:521.0px;top:1270.8px;width:3077.0px;height:2.0px;background:#e6e6e6"></div>
<div class="a" style="left:521.0px;top:1364.7px;width:3077.0px;height:2.0px;background:#e6e6e6"></div>
<div class="a" style="left:521.0px;top:1458.6px;width:3077.0px;height:2.0px;background:#e6e6e6"></div>
<div class="a" style="left:521.0px;top:1552.5px;width:3077.0px;height:2.0px;background:#e6e6e6"></div>
<div class="a" style="left:642.0px;top:520.0px;width:2.0px;height:1033.5px;background:#e6e6e6"></div>
<div class="a" style="left:824.0px;top:520.0px;width:2.0px;height:1033.5px;background:#e6e6e6"></div>
<div class="a" style="left:946.0px;top:520.0px;width:2.0px;height:1033.5px;background:#e6e6e6"></div>
<div class="a" style="left:1148.0px;top:520.0px;width:2.0px;height:1033.5px;background:#e6e6e6"></div>
<div class="a" style="left:1270.0px;top:520.0px;width:2.0px;height:1033.5px;background:#e6e6e6"></div>
<div class="a" style="left:1432.0px;top:520.0px;width:2.0px;height:1033.5px;background:#e6e6e6"></div>
<div class="a" style="left:1594.0px;top:520.0px;width:2.0px;height:1033.5px;background:#e6e6e6"></div>
<div class="a" style="left:1756.0px;top:520.0px;width:2.0px;height:1033.5px;background:#e6e6e6"></div>
<div class="a" style="left:1938.0px;top:520.0px;width:2.0px;height:1033.5px;background:#e6e6e6"></div>
<div class="a" style="left:2120.0px;top:520.0px;width:2.0px;height:1033.5px;background:#e6e6e6"></div>
<div class="a" style="left:2342.0px;top:520.0px;width:2.0px;height:1033.5px;background:#e6e6e6"></div>
<div class="a" style="left:2739.5px;top:520.0px;width:2.0px;height:1033.5px;background:#e6e6e6"></div>
<div class="a" style="left:2912.0px;top:520.0px;width:2.0px;height:1033.5px;background:#e6e6e6"></div>
<div class="a" style="left:553.0px;top:440.0px;width:136.0px;height:58.0px;background:#f8f9fb;border:1px solid #e9ebee;border-radius:12px"></div>
<svg style="left:577.0px;top:458.0px" width="26" height="28" viewBox="0 0 26 28"><g stroke="#555" stroke-width="3.4" stroke-linecap="round"><line x1="13" y1="3.5" x2="13" y2="24.5"/><line x1="3.5" y1="14" x2="23" y2="14"/></g></svg>
<div class="t" style="left:619.5px;top:459.5px;font-size:24px;color:#555;font-weight:bold;">添加</div>
<div class="a" style="left:3366.0px;top:443.0px;width:51.5px;height:51.5px;border:2px solid #cbcbcb"></div>
<div class="a" style="left:3438.0px;top:443.0px;width:51.5px;height:51.5px;border:2px solid #cbcbcb"></div>
<div class="a" style="left:3510.0px;top:443.0px;width:51.5px;height:51.5px;border:2px solid #cbcbcb"></div>
<svg style="left:3380.0px;top:455.0px" width="32" height="32" viewBox="0 0 32 32"><g fill="none" stroke="#222" stroke-width="2.4"><rect x="3.2" y="3.2" width="10.5" height="10.4"/><rect x="17.4" y="3.2" width="10.5" height="10.4"/></g><g stroke="#222" stroke-width="2.2"><line x1="5" y1="16" x2="5" y2="28"/><line x1="11" y1="16" x2="11" y2="28"/><line x1="19" y1="16" x2="19" y2="28"/><line x1="25" y1="16" x2="25" y2="28"/></g></svg>
<svg style="left:3452.0px;top:456.0px" width="30" height="30" viewBox="0 0 30 30"><path d="M2,16 L5,16 L5,12.5 Q5,11.5 6,11.5 L11,11.5 L11,8 Q11,7.5 12,7.5 L24.5,7.5 Q25.5,7.5 25.5,8.5 L25.5,26.5 Q25.5,27.5 24.5,27.5 L7,27.5 Q5.5,27.5 5,26.5 Z" fill="#2b2b2b"/><path d="M8.5,13 Q9,4.5 17,4 L17,0.5 L22.5,5 L17,9.5 L17,6.5 Q12,7 11.5,13" fill="#2b2b2b"/><path d="M6.5,11.5 L11,11.5 L11,9 L23.5,9 L23.5,16 L6.5,16 Z" fill="#f2f2f2"/></svg>
<svg style="left:3523.0px;top:456.0px" width="30" height="30" viewBox="0 0 30 30"><g fill="none" stroke="#2b2b2b" stroke-width="2.2"><path d="M7,7 L7,5 Q7,2 10,2 L20,2 Q23,2 23,5 L23,7"/><path d="M7,21.5 L5,21.5 Q2.5,21.5 2.5,19 L2.5,10 Q2.5,7 5.5,7 L24.5,7 Q27.5,7 27.5,10 L27.5,19 Q27.5,21.5 25,21.5 L23,21.5"/><rect x="7" y="16.5" width="16" height="11" rx="2.5"/><line x1="6" y1="12.5" x2="24" y2="12.5" stroke-width="1.2"/></g><g stroke="#2b2b2b" stroke-width="1.2"><line x1="5" y1="9.5" x2="7" y2="9.5"/><line x1="8" y1="9.5" x2="10" y2="9.5"/></g></svg>
<div class="t" style="left:551.5px;top:553.0px;font-size:26px;color:#666;font-weight:normal;-webkit-text-stroke:0.35px #666">id</div>
<div class="t" style="left:673.5px;top:553.0px;font-size:26px;color:#666;font-weight:normal;-webkit-text-stroke:0.35px #666">名称</div>
<div class="t" style="left:855.5px;top:553.0px;font-size:26px;color:#666;font-weight:normal;-webkit-text-stroke:0.35px #666">最…</div>
<div class="t" style="left:977.5px;top:553.0px;font-size:26px;color:#666;font-weight:normal;-webkit-text-stroke:0.35px #666">提币费率</div>
<div class="t" style="left:1179.5px;top:553.0px;font-size:26px;color:#666;font-weight:normal;-webkit-text-stroke:0.35px #666">排序</div>
<div class="t" style="left:1301.5px;top:553.0px;font-size:26px;color:#666;font-weight:normal;-webkit-text-stroke:0.35px #666">基于</div>
<div class="t" style="left:1463.5px;top:553.0px;font-size:26px;color:#666;font-weight:normal;-webkit-text-stroke:0.35px #666">法币</div>
<div class="t" style="left:1625.5px;top:553.0px;font-size:26px;color:#666;font-weight:normal;-webkit-text-stroke:0.35px #666">杠杆币</div>
<div class="t" style="left:1787.5px;top:553.0px;font-size:26px;color:#666;font-weight:normal;-webkit-text-stroke:0.35px #666">期权交易</div>
<div class="t" style="left:1969.5px;top:553.0px;font-size:26px;color:#666;font-weight:normal;-webkit-text-stroke:0.35px #666">币币</div>
<div class="t" style="left:2151.5px;top:553.0px;font-size:26px;color:#666;font-weight:normal;-webkit-text-stroke:0.35px #666">币币划转</div>
<div class="t" style="left:2373.5px;top:553.0px;font-size:26px;color:#666;font-weight:normal;-webkit-text-stroke:0.35px #666">是否购买保险</div>
<div class="t" style="left:2771.0px;top:553.0px;font-size:26px;color:#666;font-weight:normal;-webkit-text-stroke:0.35px #666">显示</div>
<div class="t" style="left:2943.5px;top:553.0px;font-size:26px;color:#666;font-weight:normal;-webkit-text-stroke:0.35px #666">操作</div>
<svg style="left:592.0px;top:553.0px" width="24" height="26" viewBox="0 0 24 26"><polygon points="12,1 22,11 2,11" fill="#b0b0b0"/><polygon points="12,24 22,14 2,14" fill="#b0b0b0"/></svg>
<div class="t" style="left:551.5px;top:647.1px;font-size:26px;color:#666;font-weight:normal;-webkit-text-stroke:0.35px #666">1</div>
<div class="t" style="left:673.5px;top:647.1px;font-size:26px;color:#666;font-weight:normal;-webkit-text-stroke:0.35px #666">BTC</div>
<div class="t" style="left:855.5px;top:647.1px;font-size:26px;color:#666;font-weight:normal;-webkit-text-stroke:0.35px #666">0.…</div>
<div class="t" style="left:977.5px;top:647.1px;font-size:26px;color:#666;font-weight:normal;-webkit-text-stroke:0.35px #666">0.0005</div>
<div class="t" style="left:1179.5px;top:647.1px;font-size:26px;color:#666;font-weight:normal;-webkit-text-stroke:0.35px #666">2</div>
<div class="t" style="left:1301.5px;top:647.1px;font-size:26px;color:#666;font-weight:normal;-webkit-text-stroke:0.35px #666">btc</div>
<div class="a" style="left:1464.5px;top:639.5px;width:98.0px;height:45.4px;background:#5fb878;border-radius:23px;box-shadow:0 0 0 1.5px #d6ecdc"></div><div class="a" style="left:1519.5px;top:646.0px;width:32.5px;height:32.5px;background:#fff;border-radius:50%"></div><div class="t" style="left:1487.0px;top:650.8px;font-size:22.5px;color:#fff;font-weight:bold;">是</div>
<div class="a" style="left:1626.5px;top:639.5px;width:98.0px;height:45.4px;background:#5fb878;border-radius:23px;box-shadow:0 0 0 1.5px #d6ecdc"></div><div class="a" style="left:1681.5px;top:646.0px;width:32.5px;height:32.5px;background:#fff;border-radius:50%"></div><div class="t" style="left:1649.0px;top:650.8px;font-size:22.5px;color:#fff;font-weight:bold;">是</div>
<div class="a" style="left:1788.5px;top:639.5px;width:98.0px;height:45.4px;background:#5fb878;border-radius:23px;box-shadow:0 0 0 1.5px #d6ecdc"></div><div class="a" style="left:1843.5px;top:646.0px;width:32.5px;height:32.5px;background:#fff;border-radius:50%"></div><div class="t" style="left:1811.0px;top:650.8px;font-size:22.5px;color:#fff;font-weight:bold;">是</div>
<div class="a" style="left:1970.5px;top:639.5px;width:98.0px;height:45.4px;background:#5fb878;border-radius:23px;box-shadow:0 0 0 1.5px #d6ecdc"></div><div class="a" style="left:2025.5px;top:646.0px;width:32.5px;height:32.5px;background:#fff;border-radius:50%"></div><div class="t" style="left:1993.0px;top:650.8px;font-size:22.5px;color:#fff;font-weight:bold;">是</div>
<div class="a" style="left:2152.0px;top:638.5px;width:100.0px;height:47.6px;background:#5fb878;border-radius:24px"></div><div class="a" style="left:2209.0px;top:646.0px;width:32.5px;height:32.5px;background:#fff;border-radius:50%"></div><div class="t" style="left:2174.5px;top:650.8px;font-size:22.5px;color:#fff;font-weight:bold;">是</div>
<div class="a" style="left:2374.0px;top:639.0px;width:93.5px;height:46.6px;background:#fff;border:2px solid #dadada;border-radius:24px"></div><div class="a" style="left:2386.0px;top:646.5px;width:31.5px;height:31.5px;background:#d2d2d2;border-radius:50%"></div><div class="t" style="left:2428.5px;top:651.8px;font-size:23.5px;color:#8e8e8e;font-weight:normal;">否</div>
<div class="a" style="left:2772.0px;top:639.5px;width:98.0px;height:45.4px;background:#5fb878;border-radius:23px;box-shadow:0 0 0 1.5px #d6ecdc"></div><div class="a" style="left:2827.0px;top:646.0px;width:32.5px;height:32.5px;background:#fff;border-radius:50%"></div><div class="t" style="left:2794.5px;top:650.8px;font-size:22.5px;color:#fff;font-weight:bold;">是</div>
<div class="a" style="left:2944.0px;top:640.2px;width:69.0px;height:44.0px;background:#7d64f2;border-radius:8px"></div>
<div class="t" style="left:2954.5px;top:649.8px;font-size:24px;color:#fff;font-weight:bold;-webkit-text-stroke:0.5px #fff">编辑</div>
<div class="a" style="left:3040.0px;top:640.2px;width:94.0px;height:44.0px;background:#1ea0ff;border-radius:8px"></div>
<div class="t" style="left:3050.5px;top:649.8px;font-size:24px;color:#fff;font-weight:bold;-webkit-text-stroke:0.5px #fff">交易对</div>
<div class="t" style="left:551.5px;top:741.0px;font-size:26px;color:#666;font-weight:normal;-webkit-text-stroke:0.35px #666">2</div>
<div class="t" style="left:673.5px;top:741.0px;font-size:26px;color:#666;font-weight:normal;-webkit-text-stroke:0.35px #666">ETH</div>
<div class="t" style="left:855.5px;top:741.0px;font-size:26px;color:#666;font-weight:normal;-webkit-text-stroke:0.35px #666">0.…</div>
<div class="t" style="left:977.5px;top:741.0px;font-size:26px;color:#666;font-weight:normal;-webkit-text-stroke:0.35px #666">0.0050</div>
<div class="t" style="left:1179.5px;top:741.0px;font-size:26px;color:#666;font-weight:normal;-webkit-text-stroke:0.35px #666">1</div>
<div class="t" style="left:1301.5px;top:741.0px;font-size:26px;color:#666;font-weight:normal;-webkit-text-stroke:0.35px #666">eth</div>
<div class="a" style="left:1464.5px;top:733.4px;width:98.0px;height:45.4px;background:#5fb878;border-radius:23px;box-shadow:0 0 0 1.5px #d6ecdc"></div><div class="a" style="left:1519.5px;top:739.9px;width:32.5px;height:32.5px;background:#fff;border-radius:50%"></div><div class="t" style="left:1487.0px;top:744.6px;font-size:22.5px;color:#fff;font-weight:bold;">是</div>
<div class="a" style="left:1626.5px;top:733.4px;width:98.0px;height:45.4px;background:#5fb878;border-radius:23px;box-shadow:0 0 0 1.5px #d6ecdc"></div><div class="a" style="left:1681.5px;top:739.9px;width:32.5px;height:32.5px;background:#fff;border-radius:50%"></div><div class="t" style="left:1649.0px;top:744.6px;font-size:22.5px;color:#fff;font-weight:bold;">是</div>
<div class="a" style="left:1788.5px;top:733.4px;width:98.0px;height:45.4px;background:#5fb878;border-radius:23px;box-shadow:0 0 0 1.5px #d6ecdc"></div><div class="a" style="left:1843.5px;top:739.9px;width:32.5px;height:32.5px;background:#fff;border-radius:50%"></div><div class="t" style="left:1811.0px;top:744.6px;font-size:22.5px;color:#fff;font-weight:bold;">是</div>
<div class="a" style="left:1970.5px;top:733.4px;width:98.0px;height:45.4px;background:#5fb878;border-radius:23px;box-shadow:0 0 0 1.5px #d6ecdc"></div><div class="a" style="left:2025.5px;top:739.9px;width:32.5px;height:32.5px;background:#fff;border-radius:50%"></div><div class="t" style="left:1993.0px;top:744.6px;font-size:22.5px;color:#fff;font-weight:bold;">是</div>
<div class="a" style="left:2152.0px;top:732.4px;width:100.0px;height:47.6px;background:#5fb878;border-radius:24px"></div><div class="a" style="left:2209.0px;top:739.9px;width:32.5px;height:32.5px;background:#fff;border-radius:50%"></div><div class="t" style="left:2174.5px;top:744.6px;font-size:22.5px;color:#fff;font-weight:bold;">是</div>
<div class="a" style="left:2374.0px;top:732.9px;width:93.5px;height:46.6px;background:#fff;border:2px solid #dadada;border-radius:24px"></div><div class="a" style="left:2386.0px;top:740.4px;width:31.5px;height:31.5px;background:#d2d2d2;border-radius:50%"></div><div class="t" style="left:2428.5px;top:745.6px;font-size:23.5px;color:#8e8e8e;font-weight:normal;">否</div>
<div class="a" style="left:2772.0px;top:733.4px;width:98.0px;height:45.4px;background:#5fb878;border-radius:23px;box-shadow:0 0 0 1.5px #d6ecdc"></div><div class="a" style="left:2827.0px;top:739.9px;width:32.5px;height:32.5px;background:#fff;border-radius:50%"></div><div class="t" style="left:2794.5px;top:744.6px;font-size:22.5px;color:#fff;font-weight:bold;">是</div>
<div class="a" style="left:2944.0px;top:734.1px;width:69.0px;height:44.0px;background:#7d64f2;border-radius:8px"></div>
<div class="t" style="left:2954.5px;top:743.6px;font-size:24px;color:#fff;font-weight:bold;-webkit-text-stroke:0.5px #fff">编辑</div>
<div class="a" style="left:3040.0px;top:734.1px;width:94.0px;height:44.0px;background:#1ea0ff;border-radius:8px"></div>
<div class="t" style="left:3050.5px;top:743.6px;font-size:24px;color:#fff;font-weight:bold;-webkit-text-stroke:0.5px #fff">交易对</div>
<div class="t" style="left:551.5px;top:834.9px;font-size:26px;color:#666;font-weight:normal;-webkit-text-stroke:0.35px #666">3</div>
<div class="t" style="left:673.5px;top:834.9px;font-size:26px;color:#666;font-weight:normal;-webkit-text-stroke:0.35px #666">USDT</div>
<div class="t" style="left:855.5px;top:834.9px;font-size:26px;color:#666;font-weight:normal;-webkit-text-stroke:0.35px #666">10…</div>
<div class="t" style="left:977.5px;top:834.9px;font-size:26px;color:#666;font-weight:normal;-webkit-text-stroke:0.35px #666">1.0000</div>
<div class="t" style="left:1179.5px;top:834.9px;font-size:26px;color:#666;font-weight:normal;-webkit-text-stroke:0.35px #666">0</div>
<div class="t" style="left:1301.5px;top:834.9px;font-size:26px;color:#666;font-weight:normal;-webkit-text-stroke:0.35px #666">usdt</div>
<div class="a" style="left:1464.5px;top:827.3px;width:98.0px;height:45.4px;background:#5fb878;border-radius:23px;box-shadow:0 0 0 1.5px #d6ecdc"></div><div class="a" style="left:1519.5px;top:833.8px;width:32.5px;height:32.5px;background:#fff;border-radius:50%"></div><div class="t" style="left:1487.0px;top:838.5px;font-size:22.5px;color:#fff;font-weight:bold;">是</div>
<div class="a" style="left:1626.5px;top:827.3px;width:98.0px;height:45.4px;background:#5fb878;border-radius:23px;box-shadow:0 0 0 1.5px #d6ecdc"></div><div class="a" style="left:1681.5px;top:833.8px;width:32.5px;height:32.5px;background:#fff;border-radius:50%"></div><div class="t" style="left:1649.0px;top:838.5px;font-size:22.5px;color:#fff;font-weight:bold;">是</div>
<div class="a" style="left:1788.5px;top:827.3px;width:98.0px;height:45.4px;background:#5fb878;border-radius:23px;box-shadow:0 0 0 1.5px #d6ecdc"></div><div class="a" style="left:1843.5px;top:833.8px;width:32.5px;height:32.5px;background:#fff;border-radius:50%"></div><div class="t" style="left:1811.0px;top:838.5px;font-size:22.5px;color:#fff;font-weight:bold;">是</div>
<div class="a" style="left:1970.5px;top:827.3px;width:98.0px;height:45.4px;background:#5fb878;border-radius:23px;box-shadow:0 0 0 1.5px #d6ecdc"></div><div class="a" style="left:2025.5px;top:833.8px;width:32.5px;height:32.5px;background:#fff;border-radius:50%"></div><div class="t" style="left:1993.0px;top:838.5px;font-size:22.5px;color:#fff;font-weight:bold;">是</div>
<div class="a" style="left:2152.0px;top:826.2px;width:100.0px;height:47.6px;background:#5fb878;border-radius:24px"></div><div class="a" style="left:2209.0px;top:833.8px;width:32.5px;height:32.5px;background:#fff;border-radius:50%"></div><div class="t" style="left:2174.5px;top:838.5px;font-size:22.5px;color:#fff;font-weight:bold;">是</div>
<div class="a" style="left:2374.0px;top:826.8px;width:93.5px;height:46.6px;background:#fff;border:2px solid #dadada;border-radius:24px"></div><div class="a" style="left:2386.0px;top:834.2px;width:31.5px;height:31.5px;background:#d2d2d2;border-radius:50%"></div><div class="t" style="left:2428.5px;top:839.5px;font-size:23.5px;color:#8e8e8e;font-weight:normal;">否</div>
<div class="a" style="left:2772.0px;top:827.3px;width:98.0px;height:45.4px;background:#5fb878;border-radius:23px;box-shadow:0 0 0 1.5px #d6ecdc"></div><div class="a" style="left:2827.0px;top:833.8px;width:32.5px;height:32.5px;background:#fff;border-radius:50%"></div><div class="t" style="left:2794.5px;top:838.5px;font-size:22.5px;color:#fff;font-weight:bold;">是</div>
<div class="a" style="left:2944.0px;top:828.0px;width:69.0px;height:44.0px;background:#7d64f2;border-radius:8px"></div>
<div class="t" style="left:2954.5px;top:837.5px;font-size:24px;color:#fff;font-weight:bold;-webkit-text-stroke:0.5px #fff">编辑</div>
<div class="a" style="left:3040.0px;top:828.0px;width:94.0px;height:44.0px;background:#1ea0ff;border-radius:8px"></div>
<div class="t" style="left:3050.5px;top:837.5px;font-size:24px;color:#fff;font-weight:bold;-webkit-text-stroke:0.5px #fff">交易对</div>
<div class="t" style="left:551.5px;top:928.8px;font-size:26px;color:#666;font-weight:normal;-webkit-text-stroke:0.35px #666">5</div>
<div class="t" style="left:673.5px;top:928.8px;font-size:26px;color:#666;font-weight:normal;-webkit-text-stroke:0.35px #666">XRP</div>
<div class="t" style="left:855.5px;top:928.8px;font-size:26px;color:#666;font-weight:normal;-webkit-text-stroke:0.35px #666">0.…</div>
<div class="t" style="left:977.5px;top:928.8px;font-size:26px;color:#666;font-weight:normal;-webkit-text-stroke:0.35px #666">0.0000</div>
<div class="t" style="left:1179.5px;top:928.8px;font-size:26px;color:#666;font-weight:normal;-webkit-text-stroke:0.35px #666">3</div>
<div class="t" style="left:1301.5px;top:928.8px;font-size:26px;color:#666;font-weight:normal;-webkit-text-stroke:0.35px #666">xrp</div>
<div class="a" style="left:1464.5px;top:921.2px;width:98.0px;height:45.4px;background:#5fb878;border-radius:23px;box-shadow:0 0 0 1.5px #d6ecdc"></div><div class="a" style="left:1519.5px;top:927.8px;width:32.5px;height:32.5px;background:#fff;border-radius:50%"></div><div class="t" style="left:1487.0px;top:932.5px;font-size:22.5px;color:#fff;font-weight:bold;">是</div>
<div class="a" style="left:1626.5px;top:921.2px;width:98.0px;height:45.4px;background:#5fb878;border-radius:23px;box-shadow:0 0 0 1.5px #d6ecdc"></div><div class="a" style="left:1681.5px;top:927.8px;width:32.5px;height:32.5px;background:#fff;border-radius:50%"></div><div class="t" style="left:1649.0px;top:932.5px;font-size:22.5px;color:#fff;font-weight:bold;">是</div>
<div class="a" style="left:1788.5px;top:921.2px;width:98.0px;height:45.4px;background:#5fb878;border-radius:23px;box-shadow:0 0 0 1.5px #d6ecdc"></div><div class="a" style="left:1843.5px;top:927.8px;width:32.5px;height:32.5px;background:#fff;border-radius:50%"></div><div class="t" style="left:1811.0px;top:932.5px;font-size:22.5px;color:#fff;font-weight:bold;">是</div>
<div class="a" style="left:1970.5px;top:921.2px;width:98.0px;height:45.4px;background:#5fb878;border-radius:23px;box-shadow:0 0 0 1.5px #d6ecdc"></div><div class="a" style="left:2025.5px;top:927.8px;width:32.5px;height:32.5px;background:#fff;border-radius:50%"></div><div class="t" style="left:1993.0px;top:932.5px;font-size:22.5px;color:#fff;font-weight:bold;">是</div>
<div class="a" style="left:2152.0px;top:920.2px;width:100.0px;height:47.6px;background:#5fb878;border-radius:24px"></div><div class="a" style="left:2209.0px;top:927.8px;width:32.5px;height:32.5px;background:#fff;border-radius:50%"></div><div class="t" style="left:2174.5px;top:932.5px;font-size:22.5px;color:#fff;font-weight:bold;">是</div>
<div class="a" style="left:2374.0px;top:920.7px;width:93.5px;height:46.6px;background:#fff;border:2px solid #dadada;border-radius:24px"></div><div class="a" style="left:2386.0px;top:928.2px;width:31.5px;height:31.5px;background:#d2d2d2;border-radius:50%"></div><div class="t" style="left:2428.5px;top:933.5px;font-size:23.5px;color:#8e8e8e;font-weight:normal;">否</div>
<div class="a" style="left:2772.0px;top:921.2px;width:98.0px;height:45.4px;background:#5fb878;border-radius:23px;box-shadow:0 0 0 1.5px #d6ecdc"></div><div class="a" style="left:2827.0px;top:927.8px;width:32.5px;height:32.5px;background:#fff;border-radius:50%"></div><div class="t" style="left:2794.5px;top:932.5px;font-size:22.5px;color:#fff;font-weight:bold;">是</div>
<div class="a" style="left:2944.0px;top:922.0px;width:69.0px;height:44.0px;background:#7d64f2;border-radius:8px"></div>
<div class="t" style="left:2954.5px;top:931.5px;font-size:24px;color:#fff;font-weight:bold;-webkit-text-stroke:0.5px #fff">编辑</div>
<div class="a" style="left:3040.0px;top:922.0px;width:94.0px;height:44.0px;background:#1ea0ff;border-radius:8px"></div>
<div class="t" style="left:3050.5px;top:931.5px;font-size:24px;color:#fff;font-weight:bold;-webkit-text-stroke:0.5px #fff">交易对</div>
<div class="t" style="left:551.5px;top:1022.7px;font-size:26px;color:#666;font-weight:normal;-webkit-text-stroke:0.35px #666">6</div>
<div class="t" style="left:673.5px;top:1022.7px;font-size:26px;color:#666;font-weight:normal;-webkit-text-stroke:0.35px #666">LTC</div>
<div class="t" style="left:855.5px;top:1022.7px;font-size:26px;color:#666;font-weight:normal;-webkit-text-stroke:0.35px #666">1.…</div>
<div class="t" style="left:977.5px;top:1022.7px;font-size:26px;color:#666;font-weight:normal;-webkit-text-stroke:0.35px #666">0.0100</div>
<div class="t" style="left:1179.5px;top:1022.7px;font-size:26px;color:#666;font-weight:normal;-webkit-text-stroke:0.35px #666">4</div>
<div class="t" style="left:1301.5px;top:1022.7px;font-size:26px;color:#666;font-weight:normal;-webkit-text-stroke:0.35px #666">erc20</div>
<div class="a" style="left:1464.5px;top:1015.1px;width:98.0px;height:45.4px;background:#5fb878;border-radius:23px;box-shadow:0 0 0 1.5px #d6ecdc"></div><div class="a" style="left:1519.5px;top:1021.6px;width:32.5px;height:32.5px;background:#fff;border-radius:50%"></div><div class="t" style="left:1487.0px;top:1026.3px;font-size:22.5px;color:#fff;font-weight:bold;">是</div>
<div class="a" style="left:1626.5px;top:1015.1px;width:98.0px;height:45.4px;background:#5fb878;border-radius:23px;box-shadow:0 0 0 1.5px #d6ecdc"></div><div class="a" style="left:1681.5px;top:1021.6px;width:32.5px;height:32.5px;background:#fff;border-radius:50%"></div><div class="t" style="left:1649.0px;top:1026.3px;font-size:22.5px;color:#fff;font-weight:bold;">是</div>
<div class="a" style="left:1788.5px;top:1015.1px;width:98.0px;height:45.4px;background:#5fb878;border-radius:23px;box-shadow:0 0 0 1.5px #d6ecdc"></div><div class="a" style="left:1843.5px;top:1021.6px;width:32.5px;height:32.5px;background:#fff;border-radius:50%"></div><div class="t" style="left:1811.0px;top:1026.3px;font-size:22.5px;color:#fff;font-weight:bold;">是</div>
<div class="a" style="left:1970.5px;top:1015.1px;width:98.0px;height:45.4px;background:#5fb878;border-radius:23px;box-shadow:0 0 0 1.5px #d6ecdc"></div><div class="a" style="left:2025.5px;top:1021.6px;width:32.5px;height:32.5px;background:#fff;border-radius:50%"></div><div class="t" style="left:1993.0px;top:1026.3px;font-size:22.5px;color:#fff;font-weight:bold;">是</div>
<div class="a" style="left:2152.0px;top:1014.0px;width:100.0px;height:47.6px;background:#5fb878;border-radius:24px"></div><div class="a" style="left:2209.0px;top:1021.6px;width:32.5px;height:32.5px;background:#fff;border-radius:50%"></div><div class="t" style="left:2174.5px;top:1026.3px;font-size:22.5px;color:#fff;font-weight:bold;">是</div>
<div class="a" style="left:2374.0px;top:1014.5px;width:93.5px;height:46.6px;background:#fff;border:2px solid #dadada;border-radius:24px"></div><div class="a" style="left:2386.0px;top:1022.0px;width:31.5px;height:31.5px;background:#d2d2d2;border-radius:50%"></div><div class="t" style="left:2428.5px;top:1027.3px;font-size:23.5px;color:#8e8e8e;font-weight:normal;">否</div>
<div class="a" style="left:2772.0px;top:1015.1px;width:98.0px;height:45.4px;background:#5fb878;border-radius:23px;box-shadow:0 0 0 1.5px #d6ecdc"></div><div class="a" style="left:2827.0px;top:1021.6px;width:32.5px;height:32.5px;background:#fff;border-radius:50%"></div><div class="t" style="left:2794.5px;top:1026.3px;font-size:22.5px;color:#fff;font-weight:bold;">是</div>
<div class="a" style="left:2944.0px;top:1015.8px;width:69.0px;height:44.0px;background:#7d64f2;border-radius:8px"></div>
<div class="t" style="left:2954.5px;top:1025.3px;font-size:24px;color:#fff;font-weight:bold;-webkit-text-stroke:0.5px #fff">编辑</div>
<div class="a" style="left:3040.0px;top:1015.8px;width:94.0px;height:44.0px;background:#1ea0ff;border-radius:8px"></div>
<div class="t" style="left:3050.5px;top:1025.3px;font-size:24px;color:#fff;font-weight:bold;-webkit-text-stroke:0.5px #fff">交易对</div>
<div class="t" style="left:551.5px;top:1116.6px;font-size:26px;color:#666;font-weight:normal;-webkit-text-stroke:0.35px #666">8</div>
<div class="t" style="left:673.5px;top:1116.6px;font-size:26px;color:#666;font-weight:normal;-webkit-text-stroke:0.35px #666">EOS</div>
<div class="t" style="left:855.5px;top:1116.6px;font-size:26px;color:#666;font-weight:normal;-webkit-text-stroke:0.35px #666">0.…</div>
<div class="t" style="left:977.5px;top:1116.6px;font-size:26px;color:#666;font-weight:normal;-webkit-text-stroke:0.35px #666">1.0000</div>
<div class="t" style="left:1179.5px;top:1116.6px;font-size:26px;color:#666;font-weight:normal;-webkit-text-stroke:0.35px #666">0</div>
<div class="t" style="left:1301.5px;top:1116.6px;font-size:26px;color:#666;font-weight:normal;-webkit-text-stroke:0.35px #666">erc20</div>
<div class="a" style="left:1464.5px;top:1109.0px;width:98.0px;height:45.4px;background:#5fb878;border-radius:23px;box-shadow:0 0 0 1.5px #d6ecdc"></div><div class="a" style="left:1519.5px;top:1115.5px;width:32.5px;height:32.5px;background:#fff;border-radius:50%"></div><div class="t" style="left:1487.0px;top:1120.2px;font-size:22.5px;color:#fff;font-weight:bold;">是</div>
<div class="a" style="left:1626.5px;top:1109.0px;width:98.0px;height:45.4px;background:#5fb878;border-radius:23px;box-shadow:0 0 0 1.5px #d6ecdc"></div><div class="a" style="left:1681.5px;top:1115.5px;width:32.5px;height:32.5px;background:#fff;border-radius:50%"></div><div class="t" style="left:1649.0px;top:1120.2px;font-size:22.5px;color:#fff;font-weight:bold;">是</div>
<div class="a" style="left:1788.5px;top:1109.0px;width:98.0px;height:45.4px;background:#5fb878;border-radius:23px;box-shadow:0 0 0 1.5px #d6ecdc"></div><div class="a" style="left:1843.5px;top:1115.5px;width:32.5px;height:32.5px;background:#fff;border-radius:50%"></div><div class="t" style="left:1811.0px;top:1120.2px;font-size:22.5px;color:#fff;font-weight:bold;">是</div>
<div class="a" style="left:1970.5px;top:1109.0px;width:98.0px;height:45.4px;background:#5fb878;border-radius:23px;box-shadow:0 0 0 1.5px #d6ecdc"></div><div class="a" style="left:2025.5px;top:1115.5px;width:32.5px;height:32.5px;background:#fff;border-radius:50%"></div><div class="t" style="left:1993.0px;top:1120.2px;font-size:22.5px;color:#fff;font-weight:bold;">是</div>
<div class="a" style="left:2152.0px;top:1108.0px;width:100.0px;height:47.6px;background:#5fb878;border-radius:24px"></div><div class="a" style="left:2209.0px;top:1115.5px;width:32.5px;height:32.5px;background:#fff;border-radius:50%"></div><div class="t" style="left:2174.5px;top:1120.2px;font-size:22.5px;color:#fff;font-weight:bold;">是</div>
<div class="a" style="left:2374.0px;top:1108.5px;width:93.5px;height:46.6px;background:#fff;border:2px solid #dadada;border-radius:24px"></div><div class="a" style="left:2386.0px;top:1116.0px;width:31.5px;height:31.5px;background:#d2d2d2;border-radius:50%"></div><div class="t" style="left:2428.5px;top:1121.2px;font-size:23.5px;color:#8e8e8e;font-weight:normal;">否</div>
<div class="a" style="left:2772.0px;top:1109.0px;width:98.0px;height:45.4px;background:#5fb878;border-radius:23px;box-shadow:0 0 0 1.5px #d6ecdc"></div><div class="a" style="left:2827.0px;top:1115.5px;width:32.5px;height:32.5px;background:#fff;border-radius:50%"></div><div class="t" style="left:2794.5px;top:1120.2px;font-size:22.5px;color:#fff;font-weight:bold;">是</div>
<div class="a" style="left:2944.0px;top:1109.8px;width:69.0px;height:44.0px;background:#7d64f2;border-radius:8px"></div>
<div class="t" style="left:2954.5px;top:1119.2px;font-size:24px;color:#fff;font-weight:bold;-webkit-text-stroke:0.5px #fff">编辑</div>
<div class="a" style="left:3040.0px;top:1109.8px;width:94.0px;height:44.0px;background:#1ea0ff;border-radius:8px"></div>
<div class="t" style="left:3050.5px;top:1119.2px;font-size:24px;color:#fff;font-weight:bold;-webkit-text-stroke:0.5px #fff">交易对</div>
<div class="t" style="left:551.5px;top:1210.5px;font-size:26px;color:#666;font-weight:normal;-webkit-text-stroke:0.35px #666">10</div>
<div class="t" style="left:673.5px;top:1210.5px;font-size:26px;color:#666;font-weight:normal;-webkit-text-stroke:0.35px #666">BCH</div>
<div class="t" style="left:855.5px;top:1210.5px;font-size:26px;color:#666;font-weight:normal;-webkit-text-stroke:0.35px #666">50…</div>
<div class="t" style="left:977.5px;top:1210.5px;font-size:26px;color:#666;font-weight:normal;-webkit-text-stroke:0.35px #666">1.0000</div>
<div class="t" style="left:1179.5px;top:1210.5px;font-size:26px;color:#666;font-weight:normal;-webkit-text-stroke:0.35px #666">0</div>
<div class="t" style="left:1301.5px;top:1210.5px;font-size:26px;color:#666;font-weight:normal;-webkit-text-stroke:0.35px #666">erc20</div>
<div class="a" style="left:1464.5px;top:1203.0px;width:98.0px;height:45.4px;background:#5fb878;border-radius:23px;box-shadow:0 0 0 1.5px #d6ecdc"></div><div class="a" style="left:1519.5px;top:1209.5px;width:32.5px;height:32.5px;background:#fff;border-radius:50%"></div><div class="t" style="left:1487.0px;top:1214.2px;font-size:22.5px;color:#fff;font-weight:bold;">是</div>
<div class="a" style="left:1626.5px;top:1203.0px;width:98.0px;height:45.4px;background:#5fb878;border-radius:23px;box-shadow:0 0 0 1.5px #d6ecdc"></div><div class="a" style="left:1681.5px;top:1209.5px;width:32.5px;height:32.5px;background:#fff;border-radius:50%"></div><div class="t" style="left:1649.0px;top:1214.2px;font-size:22.5px;color:#fff;font-weight:bold;">是</div>
<div class="a" style="left:1788.5px;top:1203.0px;width:98.0px;height:45.4px;background:#5fb878;border-radius:23px;box-shadow:0 0 0 1.5px #d6ecdc"></div><div class="a" style="left:1843.5px;top:1209.5px;width:32.5px;height:32.5px;background:#fff;border-radius:50%"></div><div class="t" style="left:1811.0px;top:1214.2px;font-size:22.5px;color:#fff;font-weight:bold;">是</div>
<div class="a" style="left:1970.5px;top:1203.0px;width:98.0px;height:45.4px;background:#5fb878;border-radius:23px;box-shadow:0 0 0 1.5px #d6ecdc"></div><div class="a" style="left:2025.5px;top:1209.5px;width:32.5px;height:32.5px;background:#fff;border-radius:50%"></div><div class="t" style="left:1993.0px;top:1214.2px;font-size:22.5px;color:#fff;font-weight:bold;">是</div>
<div class="a" style="left:2152.0px;top:1201.9px;width:100.0px;height:47.6px;background:#5fb878;border-radius:24px"></div><div class="a" style="left:2209.0px;top:1209.5px;width:32.5px;height:32.5px;background:#fff;border-radius:50%"></div><div class="t" style="left:2174.5px;top:1214.2px;font-size:22.5px;color:#fff;font-weight:bold;">是</div>
<div class="a" style="left:2374.0px;top:1202.4px;width:93.5px;height:46.6px;background:#fff;border:2px solid #dadada;border-radius:24px"></div><div class="a" style="left:2386.0px;top:1209.9px;width:31.5px;height:31.5px;background:#d2d2d2;border-radius:50%"></div><div class="t" style="left:2428.5px;top:1215.2px;font-size:23.5px;color:#8e8e8e;font-weight:normal;">否</div>
<div class="a" style="left:2772.0px;top:1203.0px;width:98.0px;height:45.4px;background:#5fb878;border-radius:23px;box-shadow:0 0 0 1.5px #d6ecdc"></div><div class="a" style="left:2827.0px;top:1209.5px;width:32.5px;height:32.5px;background:#fff;border-radius:50%"></div><div class="t" style="left:2794.5px;top:1214.2px;font-size:22.5px;color:#fff;font-weight:bold;">是</div>
<div class="a" style="left:2944.0px;top:1203.7px;width:69.0px;height:44.0px;background:#7d64f2;border-radius:8px"></div>
<div class="t" style="left:2954.5px;top:1213.2px;font-size:24px;color:#fff;font-weight:bold;-webkit-text-stroke:0.5px #fff">编辑</div>
<div class="a" style="left:3040.0px;top:1203.7px;width:94.0px;height:44.0px;background:#1ea0ff;border-radius:8px"></div>
<div class="t" style="left:3050.5px;top:1213.2px;font-size:24px;color:#fff;font-weight:bold;-webkit-text-stroke:0.5px #fff">交易对</div>
<div class="t" style="left:551.5px;top:1304.4px;font-size:26px;color:#666;font-weight:normal;-webkit-text-stroke:0.35px #666">11</div>
<div class="t" style="left:673.5px;top:1304.4px;font-size:26px;color:#666;font-weight:normal;-webkit-text-stroke:0.35px #666">ETC</div>
<div class="t" style="left:855.5px;top:1304.4px;font-size:26px;color:#666;font-weight:normal;-webkit-text-stroke:0.35px #666">0.…</div>
<div class="t" style="left:977.5px;top:1304.4px;font-size:26px;color:#666;font-weight:normal;-webkit-text-stroke:0.35px #666">0.0500</div>
<div class="t" style="left:1179.5px;top:1304.4px;font-size:26px;color:#666;font-weight:normal;-webkit-text-stroke:0.35px #666">0</div>
<div class="t" style="left:1301.5px;top:1304.4px;font-size:26px;color:#666;font-weight:normal;-webkit-text-stroke:0.35px #666">erc20</div>
<div class="a" style="left:1464.5px;top:1296.9px;width:98.0px;height:45.4px;background:#5fb878;border-radius:23px;box-shadow:0 0 0 1.5px #d6ecdc"></div><div class="a" style="left:1519.5px;top:1303.4px;width:32.5px;height:32.5px;background:#fff;border-radius:50%"></div><div class="t" style="left:1487.0px;top:1308.1px;font-size:22.5px;color:#fff;font-weight:bold;">是</div>
<div class="a" style="left:1626.5px;top:1296.9px;width:98.0px;height:45.4px;background:#5fb878;border-radius:23px;box-shadow:0 0 0 1.5px #d6ecdc"></div><div class="a" style="left:1681.5px;top:1303.4px;width:32.5px;height:32.5px;background:#fff;border-radius:50%"></div><div class="t" style="left:1649.0px;top:1308.1px;font-size:22.5px;color:#fff;font-weight:bold;">是</div>
<div class="a" style="left:1788.5px;top:1296.9px;width:98.0px;height:45.4px;background:#5fb878;border-radius:23px;box-shadow:0 0 0 1.5px #d6ecdc"></div><div class="a" style="left:1843.5px;top:1303.4px;width:32.5px;height:32.5px;background:#fff;border-radius:50%"></div><div class="t" style="left:1811.0px;top:1308.1px;font-size:22.5px;color:#fff;font-weight:bold;">是</div>
<div class="a" style="left:1970.5px;top:1296.9px;width:98.0px;height:45.4px;background:#5fb878;border-radius:23px;box-shadow:0 0 0 1.5px #d6ecdc"></div><div class="a" style="left:2025.5px;top:1303.4px;width:32.5px;height:32.5px;background:#fff;border-radius:50%"></div><div class="t" style="left:1993.0px;top:1308.1px;font-size:22.5px;color:#fff;font-weight:bold;">是</div>
<div class="a" style="left:2152.0px;top:1295.8px;width:100.0px;height:47.6px;background:#5fb878;border-radius:24px"></div><div class="a" style="left:2209.0px;top:1303.4px;width:32.5px;height:32.5px;background:#fff;border-radius:50%"></div><div class="t" style="left:2174.5px;top:1308.1px;font-size:22.5px;color:#fff;font-weight:bold;">是</div>
<div class="a" style="left:2374.0px;top:1296.3px;width:93.5px;height:46.6px;background:#fff;border:2px solid #dadada;border-radius:24px"></div><div class="a" style="left:2386.0px;top:1303.8px;width:31.5px;height:31.5px;background:#d2d2d2;border-radius:50%"></div><div class="t" style="left:2428.5px;top:1309.1px;font-size:23.5px;color:#8e8e8e;font-weight:normal;">否</div>
<div class="a" style="left:2772.0px;top:1296.9px;width:98.0px;height:45.4px;background:#5fb878;border-radius:23px;box-shadow:0 0 0 1.5px #d6ecdc"></div><div class="a" style="left:2827.0px;top:1303.4px;width:32.5px;height:32.5px;background:#fff;border-radius:50%"></div><div class="t" style="left:2794.5px;top:1308.1px;font-size:22.5px;color:#fff;font-weight:bold;">是</div>
<div class="a" style="left:2944.0px;top:1297.6px;width:69.0px;height:44.0px;background:#7d64f2;border-radius:8px"></div>
<div class="t" style="left:2954.5px;top:1307.1px;font-size:24px;color:#fff;font-weight:bold;-webkit-text-stroke:0.5px #fff">编辑</div>
<div class="a" style="left:3040.0px;top:1297.6px;width:94.0px;height:44.0px;background:#1ea0ff;border-radius:8px"></div>
<div class="t" style="left:3050.5px;top:1307.1px;font-size:24px;color:#fff;font-weight:bold;-webkit-text-stroke:0.5px #fff">交易对</div>
<div class="t" style="left:551.5px;top:1398.3px;font-size:26px;color:#666;font-weight:normal;-webkit-text-stroke:0.35px #666">13</div>
<div class="t" style="left:673.5px;top:1398.3px;font-size:26px;color:#666;font-weight:normal;-webkit-text-stroke:0.35px #666">HT</div>
<div class="t" style="left:855.5px;top:1398.3px;font-size:26px;color:#666;font-weight:normal;-webkit-text-stroke:0.35px #666">0.…</div>
<div class="t" style="left:977.5px;top:1398.3px;font-size:26px;color:#666;font-weight:normal;-webkit-text-stroke:0.35px #666">0.0005</div>
<div class="t" style="left:1179.5px;top:1398.3px;font-size:26px;color:#666;font-weight:normal;-webkit-text-stroke:0.35px #666">0</div>
<div class="t" style="left:1301.5px;top:1398.3px;font-size:26px;color:#666;font-weight:normal;-webkit-text-stroke:0.35px #666">erc20</div>
<div class="a" style="left:1464.5px;top:1390.8px;width:98.0px;height:45.4px;background:#5fb878;border-radius:23px;box-shadow:0 0 0 1.5px #d6ecdc"></div><div class="a" style="left:1519.5px;top:1397.2px;width:32.5px;height:32.5px;background:#fff;border-radius:50%"></div><div class="t" style="left:1487.0px;top:1402.0px;font-size:22.5px;color:#fff;font-weight:bold;">是</div>
<div class="a" style="left:1626.5px;top:1390.2px;width:93.5px;height:46.6px;background:#fff;border:2px solid #dadada;border-radius:24px"></div><div class="a" style="left:1638.5px;top:1397.7px;width:31.5px;height:31.5px;background:#d2d2d2;border-radius:50%"></div><div class="t" style="left:1681.0px;top:1403.0px;font-size:23.5px;color:#8e8e8e;font-weight:normal;">否</div>
<div class="a" style="left:1788.5px;top:1390.8px;width:98.0px;height:45.4px;background:#5fb878;border-radius:23px;box-shadow:0 0 0 1.5px #d6ecdc"></div><div class="a" style="left:1843.5px;top:1397.2px;width:32.5px;height:32.5px;background:#fff;border-radius:50%"></div><div class="t" style="left:1811.0px;top:1402.0px;font-size:22.5px;color:#fff;font-weight:bold;">是</div>
<div class="a" style="left:1970.5px;top:1390.8px;width:98.0px;height:45.4px;background:#5fb878;border-radius:23px;box-shadow:0 0 0 1.5px #d6ecdc"></div><div class="a" style="left:2025.5px;top:1397.2px;width:32.5px;height:32.5px;background:#fff;border-radius:50%"></div><div class="t" style="left:1993.0px;top:1402.0px;font-size:22.5px;color:#fff;font-weight:bold;">是</div>
<div class="a" style="left:2152.0px;top:1389.7px;width:100.0px;height:47.6px;background:#5fb878;border-radius:24px"></div><div class="a" style="left:2209.0px;top:1397.2px;width:32.5px;height:32.5px;background:#fff;border-radius:50%"></div><div class="t" style="left:2174.5px;top:1402.0px;font-size:22.5px;color:#fff;font-weight:bold;">是</div>
<div class="a" style="left:2374.0px;top:1390.2px;width:93.5px;height:46.6px;background:#fff;border:2px solid #dadada;border-radius:24px"></div><div class="a" style="left:2386.0px;top:1397.7px;width:31.5px;height:31.5px;background:#d2d2d2;border-radius:50%"></div><div class="t" style="left:2428.5px;top:1403.0px;font-size:23.5px;color:#8e8e8e;font-weight:normal;">否</div>
<div class="a" style="left:2772.0px;top:1390.8px;width:98.0px;height:45.4px;background:#5fb878;border-radius:23px;box-shadow:0 0 0 1.5px #d6ecdc"></div><div class="a" style="left:2827.0px;top:1397.2px;width:32.5px;height:32.5px;background:#fff;border-radius:50%"></div><div class="t" style="left:2794.5px;top:1402.0px;font-size:22.5px;color:#fff;font-weight:bold;">是</div>
<div class="a" style="left:2944.0px;top:1391.5px;width:69.0px;height:44.0px;background:#7d64f2;border-radius:8px"></div>
<div class="t" style="left:2954.5px;top:1401.0px;font-size:24px;color:#fff;font-weight:bold;-webkit-text-stroke:0.5px #fff">编辑</div>
<div class="a" style="left:3040.0px;top:1391.5px;width:94.0px;height:44.0px;background:#1ea0ff;border-radius:8px"></div>
<div class="t" style="left:3050.5px;top:1401.0px;font-size:24px;color:#fff;font-weight:bold;-webkit-text-stroke:0.5px #fff">交易对</div>
<div class="t" style="left:551.5px;top:1492.2px;font-size:26px;color:#666;font-weight:normal;-webkit-text-stroke:0.35px #666">32</div>
<div class="t" style="left:673.5px;top:1492.2px;font-size:26px;color:#666;font-weight:normal;-webkit-text-stroke:0.35px #666">TRX</div>
<div class="t" style="left:855.5px;top:1492.2px;font-size:26px;color:#666;font-weight:normal;-webkit-text-stroke:0.35px #666">0.…</div>
<div class="t" style="left:977.5px;top:1492.2px;font-size:26px;color:#666;font-weight:normal;-webkit-text-stroke:0.35px #666">0.0500</div>
<div class="t" style="left:1179.5px;top:1492.2px;font-size:26px;color:#666;font-weight:normal;-webkit-text-stroke:0.35px #666">0</div>
<div class="t" style="left:1301.5px;top:1492.2px;font-size:26px;color:#666;font-weight:normal;-webkit-text-stroke:0.35px #666">erc20</div>
<div class="a" style="left:1464.5px;top:1484.6px;width:98.0px;height:45.4px;background:#5fb878;border-radius:23px;box-shadow:0 0 0 1.5px #d6ecdc"></div><div class="a" style="left:1519.5px;top:1491.1px;width:32.5px;height:32.5px;background:#fff;border-radius:50%"></div><div class="t" style="left:1487.0px;top:1495.8px;font-size:22.5px;color:#fff;font-weight:bold;">是</div>
<div class="a" style="left:1626.5px;top:1484.0px;width:93.5px;height:46.6px;background:#fff;border:2px solid #dadada;border-radius:24px"></div><div class="a" style="left:1638.5px;top:1491.5px;width:31.5px;height:31.5px;background:#d2d2d2;border-radius:50%"></div><div class="t" style="left:1681.0px;top:1496.8px;font-size:23.5px;color:#8e8e8e;font-weight:normal;">否</div>
<div class="a" style="left:1788.5px;top:1484.6px;width:98.0px;height:45.4px;background:#5fb878;border-radius:23px;box-shadow:0 0 0 1.5px #d6ecdc"></div><div class="a" style="left:1843.5px;top:1491.1px;width:32.5px;height:32.5px;background:#fff;border-radius:50%"></div><div class="t" style="left:1811.0px;top:1495.8px;font-size:22.5px;color:#fff;font-weight:bold;">是</div>
<div class="a" style="left:1970.5px;top:1484.6px;width:98.0px;height:45.4px;background:#5fb878;border-radius:23px;box-shadow:0 0 0 1.5px #d6ecdc"></div><div class="a" style="left:2025.5px;top:1491.1px;width:32.5px;height:32.5px;background:#fff;border-radius:50%"></div><div class="t" style="left:1993.0px;top:1495.8px;font-size:22.5px;color:#fff;font-weight:bold;">是</div>
<div class="a" style="left:2152.0px;top:1483.5px;width:100.0px;height:47.6px;background:#5fb878;border-radius:24px"></div><div class="a" style="left:2209.0px;top:1491.1px;width:32.5px;height:32.5px;background:#fff;border-radius:50%"></div><div class="t" style="left:2174.5px;top:1495.8px;font-size:22.5px;color:#fff;font-weight:bold;">是</div>
<div class="a" style="left:2374.0px;top:1484.0px;width:93.5px;height:46.6px;background:#fff;border:2px solid #dadada;border-radius:24px"></div><div class="a" style="left:2386.0px;top:1491.5px;width:31.5px;height:31.5px;background:#d2d2d2;border-radius:50%"></div><div class="t" style="left:2428.5px;top:1496.8px;font-size:23.5px;color:#8e8e8e;font-weight:normal;">否</div>
<div class="a" style="left:2772.0px;top:1484.6px;width:98.0px;height:45.4px;background:#5fb878;border-radius:23px;box-shadow:0 0 0 1.5px #d6ecdc"></div><div class="a" style="left:2827.0px;top:1491.1px;width:32.5px;height:32.5px;background:#fff;border-radius:50%"></div><div class="t" style="left:2794.5px;top:1495.8px;font-size:22.5px;color:#fff;font-weight:bold;">是</div>
<div class="a" style="left:2944.0px;top:1485.3px;width:69.0px;height:44.0px;background:#7d64f2;border-radius:8px"></div>
<div class="t" style="left:2954.5px;top:1494.8px;font-size:24px;color:#fff;font-weight:bold;-webkit-text-stroke:0.5px #fff">编辑</div>
<div class="a" style="left:3040.0px;top:1485.3px;width:94.0px;height:44.0px;background:#1ea0ff;border-radius:8px"></div>
<div class="t" style="left:3050.5px;top:1494.8px;font-size:24px;color:#fff;font-weight:bold;-webkit-text-stroke:0.5px #fff">交易对</div>
<svg style="left:552.0px;top:1581.0px" width="22" height="28" viewBox="0 0 22 28"><polyline points="17,2 5,14 17,26" fill="none" stroke="#cfcfcf" stroke-width="2.2"/></svg>
<div class="a" style="left:600.0px;top:1569.0px;width:100.5px;height:52.0px;background:#f2f2f2;border-radius:7px"></div>
<div class="t" style="left:634.0px;top:1581.5px;font-size:26px;color:#888;font-weight:normal;">1</div>
<div class="t" style="left:703.0px;top:1581.5px;font-size:26px;color:#1a9bdc;font-weight:normal;">2</div>
<div class="t" style="left:762.0px;top:1581.5px;font-size:26px;color:#1a9bdc;font-weight:normal;">3</div>
<div class="t" style="left:797.0px;top:1581.5px;font-size:26px;color:#888;font-weight:bold;">…</div>
<div class="t" style="left:844.0px;top:1581.5px;font-size:26px;color:#1a9bdc;font-weight:normal;">5</div>
<svg style="left:908.0px;top:1581.0px" width="22" height="28" viewBox="0 0 22 28"><polyline points="5,2 17,14 5,26" fill="none" stroke="#1a9bdc" stroke-width="2.6"/></svg>
<div class="t" style="left:957.0px;top:1581.5px;font-size:24px;color:#999;font-weight:normal;">到第</div>
<div class="a" style="left:1026.0px;top:1569.5px;width:79.5px;height:50.5px;background:#fff;border:2px solid #e6e6e6;border-radius:2px"></div>
<div class="t" style="left:1059.0px;top:1581.5px;font-size:26px;color:#333;font-weight:normal;">1</div>
<div class="t" style="left:1125.0px;top:1581.5px;font-size:24px;color:#999;font-weight:normal;">页</div>
<div class="a" style="left:1170.0px;top:1569.5px;width:91.0px;height:50.5px;background:#fff;border:2px solid #e6e6e6;border-radius:2px"></div>
<div class="t" style="left:1191.0px;top:1584.0px;font-size:24px;color:#333;font-weight:normal;-webkit-text-stroke:0.4px #333">确定</div>
<div class="t" style="left:1282.0px;top:1582.0px;font-size:25px;color:#333;font-weight:normal;-webkit-text-stroke:0.3px #333">共 45 条</div>
<div class="a" style="left:1391.0px;top:1574.0px;width:151.0px;height:38.0px;background:linear-gradient(#f4f4f4,#e9e9e9);border:1px solid #cfcfcf;border-radius:6px;box-shadow:0 1px 2px rgba(0,0,0,0.1)"></div>
<div class="t" style="left:1408.0px;top:1582.0px;font-size:25px;color:#111;font-weight:normal;-webkit-text-stroke:0.3px #111">10 条/页</div>
<svg style="left:1517.0px;top:1580.0px" width="16" height="28" viewBox="0 0 16 28"><polygon points="8,2 14,10 2,10" fill="#222"/><polygon points="8,25 14,17 2,17" fill="#222"/></svg>
</div>
<svg class="a" style="left:0;top:0;opacity:0.14" width="3902" height="2322" viewBox="0 0 3902 2322"><use href="#wm" fill="url(#wg2)" transform="translate(68.0,67.0)"/><use href="#wm" fill="url(#wg2)" transform="translate(605.6,67.0)"/><use href="#wm" fill="url(#wg2)" transform="translate(1143.2,67.0)"/><use href="#wm" fill="url(#wg2)" transform="translate(1680.8,67.0)"/><use href="#wm" fill="url(#wg2)" transform="translate(2218.4,67.0)"/><use href="#wm" fill="url(#wg2)" transform="translate(2756.0,67.0)"/><use href="#wm" fill="url(#wg2)" transform="translate(3293.6,67.0)"/><use href="#wm" fill="url(#wg2)" transform="translate(3831.2,67.0)"/><use href="#wm" fill="url(#wg2)" transform="translate(68.0,610.2)"/><use href="#wm" fill="url(#wg2)" transform="translate(605.6,610.2)"/><use href="#wm" fill="url(#wg2)" transform="translate(1143.2,610.2)"/><use href="#wm" fill="url(#wg2)" transform="translate(1680.8,610.2)"/><use href="#wm" fill="url(#wg2)" transform="translate(2218.4,610.2)"/><use href="#wm" fill="url(#wg2)" transform="translate(2756.0,610.2)"/><use href="#wm" fill="url(#wg2)" transform="translate(3293.6,610.2)"/><use href="#wm" fill="url(#wg2)" transform="translate(3831.2,610.2)"/><use href="#wm" fill="url(#wg2)" transform="translate(68.0,1153.4)"/><use href="#wm" fill="url(#wg2)" transform="translate(605.6,1153.4)"/><use href="#wm" fill="url(#wg2)" transform="translate(1143.2,1153.4)"/><use href="#wm" fill="url(#wg2)" transform="translate(1680.8,1153.4)"/><use href="#wm" fill="url(#wg2)" transform="translate(2218.4,1153.4)"/><use href="#wm" fill="url(#wg2)" transform="translate(2756.0,1153.4)"/><use href="#wm" fill="url(#wg2)" transform="translate(3293.6,1153.4)"/><use href="#wm" fill="url(#wg2)" transform="translate(3831.2,1153.4)"/><use href="#wm" fill="url(#wg2)" transform="translate(68.0,1696.6)"/><use href="#wm" fill="url(#wg2)" transform="translate(605.6,1696.6)"/><use href="#wm" fill="url(#wg2)" transform="translate(1143.2,1696.6)"/><use href="#wm" fill="url(#wg2)" transform="translate(1680.8,1696.6)"/><use href="#wm" fill="url(#wg2)" transform="translate(2218.4,1696.6)"/><use href="#wm" fill="url(#wg2)" transform="translate(2756.0,1696.6)"/><use href="#wm" fill="url(#wg2)" transform="translate(3293.6,1696.6)"/><use href="#wm" fill="url(#wg2)" transform="translate(3831.2,1696.6)"/><use href="#wm" fill="url(#wg2)" transform="translate(68.0,2239.8)"/><use href="#wm" fill="url(#wg2)" transform="translate(605.6,2239.8)"/><use href="#wm" fill="url(#wg2)" transform="translate(1143.2,2239.8)"/><use href="#wm" fill="url(#wg2)" transform="translate(1680.8,2239.8)"/><use href="#wm" fill="url(#wg2)" transform="translate(2218.4,2239.8)"/><use href="#wm" fill="url(#wg2)" transform="translate(2756.0,2239.8)"/><use href="#wm" fill="url(#wg2)" transform="translate(3293.6,2239.8)"/><use href="#wm" fill="url(#wg2)" transform="translate(3831.2,2239.8)"/></svg>
</body></html>
